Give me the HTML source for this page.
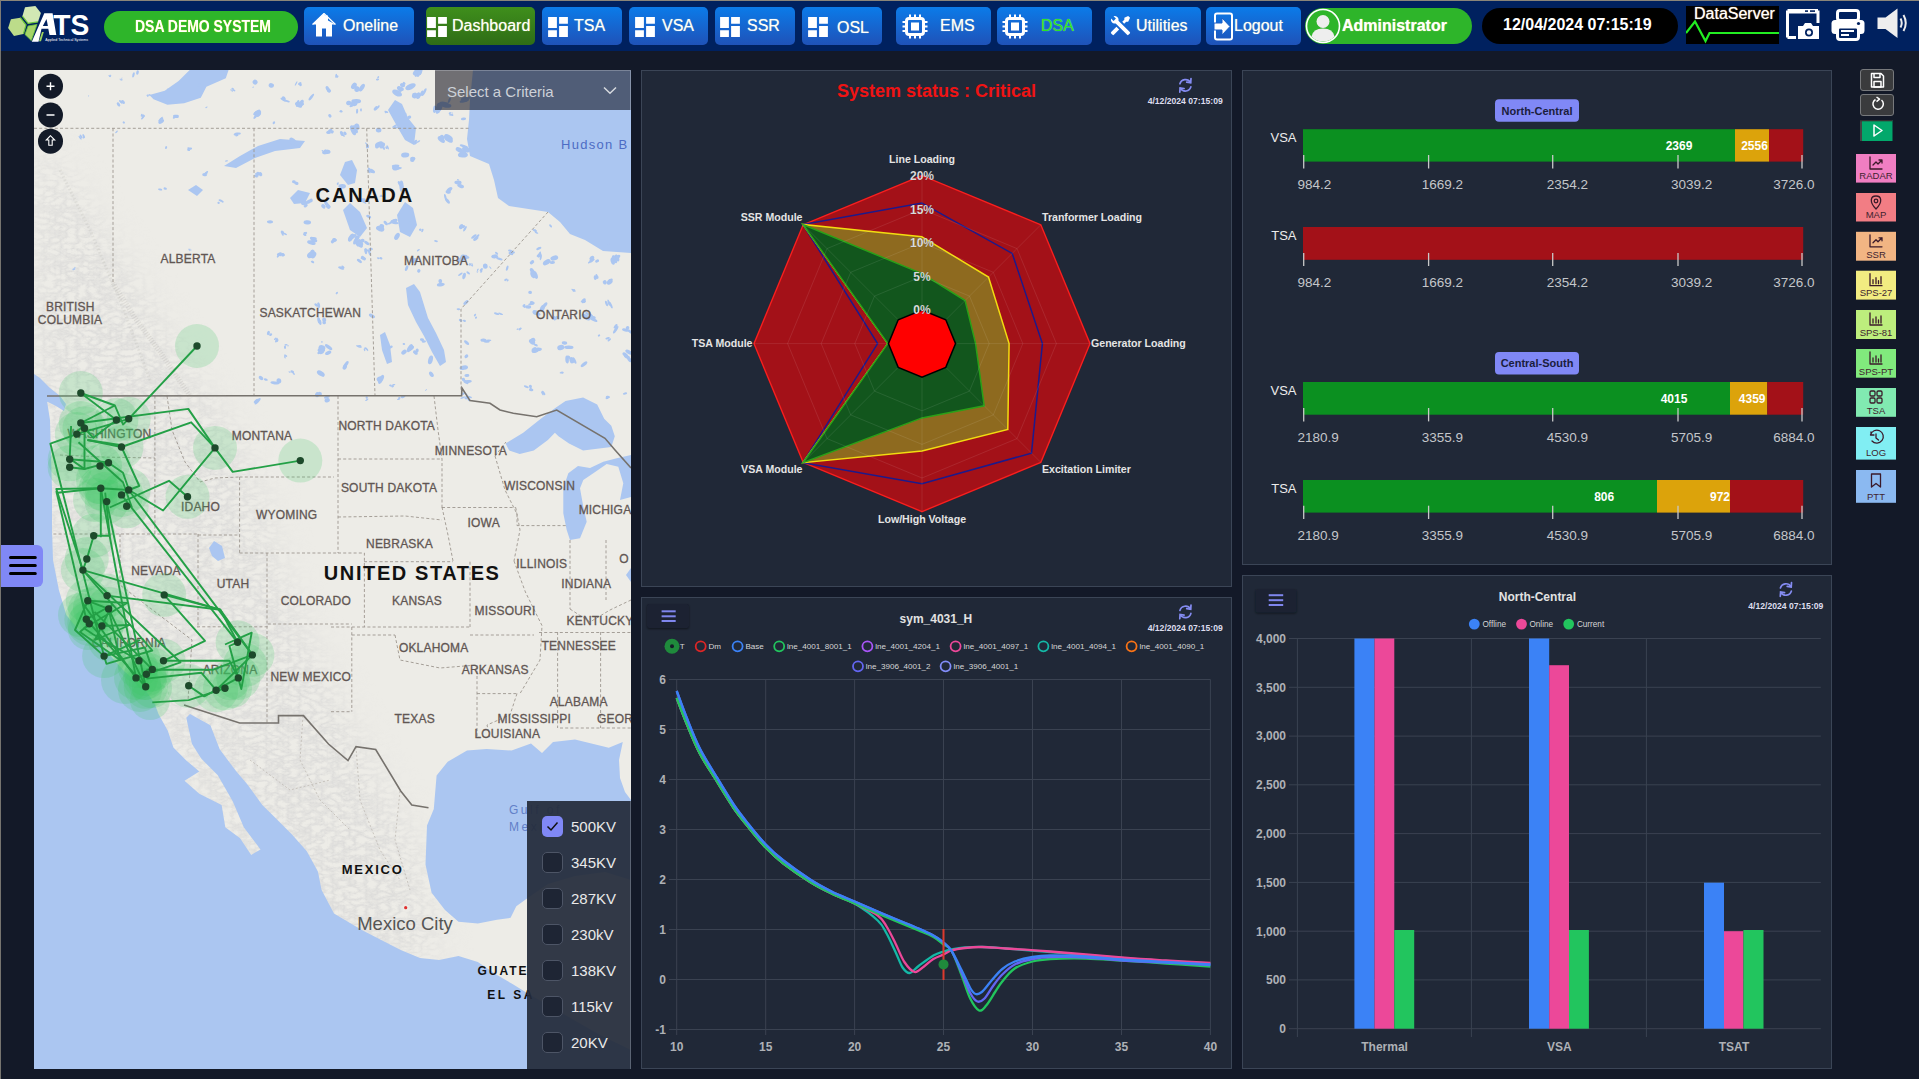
<!DOCTYPE html>
<html><head><meta charset="utf-8"><style>
*{margin:0;padding:0;box-sizing:border-box}
html,body{width:1919px;height:1079px;overflow:hidden}
body{background:#131928;font-family:"Liberation Sans",sans-serif;position:relative;color:#fff}
.abs{position:absolute}
#hdr{position:absolute;left:0;top:0;width:1919px;height:51px;background:#00215f}
#hdr:before{content:"";position:absolute;left:0;top:0;width:1919px;height:1px;background:#8a8579}
#hdr:after{content:"";position:absolute;left:0;top:0;width:1px;height:51px;background:#7d7a74}
#lline{position:absolute;left:0;top:51px;width:1px;height:1028px;background:#76746f;z-index:5}
.btn{position:absolute;top:7px;height:38px;border-radius:5px;color:#fff;font-size:16px}
.btn span{position:absolute;top:10px;white-space:nowrap;text-shadow:0 0 1px rgba(255,255,160,.7)}
.btn svg{position:absolute}
.pill{position:absolute;top:11px;height:32px;border-radius:16px;background:#2eb52a}
.panel{position:absolute;background:#202837;border:1px solid #3b4556}
</style></head><body>
<div id="hdr">
<svg class="abs" style="left:0;top:0" width="100" height="50" viewBox="0 0 100 50">
  <polygon points="25,7.3 35.4,6 40.9,13 38,21.9 28.1,23.4 22.4,16.2" fill="#d2e8b4"/>
  <path d="M22.4,16.2 L28.1,23.4 L38,21.9" fill="none" stroke="#6cc83c" stroke-width="1.2"/>
  <polygon points="10.9,19.3 20.3,17.7 26,25 23.4,33.9 14,36 8.1,28.1" fill="#bcdc8a"/>
  <path d="M20.3,17.7 L26,25 L23.4,33.9" fill="none" stroke="#6cc83c" stroke-width="1.2"/>
  <polygon points="28.1,26 37,24.5 31.3,40.6 25,34.4" fill="#a6d468" stroke="#6cc83c" stroke-width="0.8"/>
  <polygon points="31.8,41.7 44.3,13.3 52.6,13.3 56.3,35 49.5,35 48.3,28.7 41.5,28.7 38.5,41.7" fill="#fff"/>
  <polygon points="42.8,26 47.9,26 46.5,19" fill="#00215f"/>
  <polygon points="39,41.2 42,32 43.8,32 41,41.2" fill="#9ed45c"/>
  <text x="53.2" y="35.2" font-family="Liberation Sans" font-weight="bold" font-size="30" fill="#fff" textLength="36" lengthAdjust="spacingAndGlyphs">TS</text>
  <text x="45.3" y="41.3" font-family="Liberation Sans" font-size="3.8" fill="#fff" textLength="42.7" lengthAdjust="spacingAndGlyphs">Applied Technical Systems</text>
 </svg>
<div class="pill" style="left:104px;width:194px"><span class="abs" style="left:31px;top:7px;font-size:16px;font-weight:bold;display:inline-block;transform:scaleX(0.872);transform-origin:0 0;text-shadow:0 0 1px #ee0;white-space:nowrap">DSA DEMO SYSTEM</span></div>
<div class="btn" style="left:304px;width:110px;background:linear-gradient(#0b7be9,#1f52b8)"><svg style="left:8px;top:5px" width="24" height="25" viewBox="0 0 24 25"><path fill="#fff" d="M12 1.5L0.5 12.5h3.5v12h6v-8h4v8h6v-12h3.5L16 8.5V3.5h-3z"/><path d="M12 1.5L0.5 12.5M12 1.5L23.5 12.5" stroke="#fff" stroke-width="1.2"/></svg><span style="left:39px;color:#fff">Oneline</span></div>
<div class="btn" style="left:426px;width:109px;background:linear-gradient(#3f8f1c,#2e6c16)"><svg style="left:0px;top:9px" width="22" height="22" viewBox="2 2 20 20"><path fill="#fff" d="M13,3V9H21V3M13,21H21V11H13M3,21H11V15H3M3,13H11V3H3V13Z"/></svg><span style="left:26px;color:#fff">Dashboard</span></div>
<div class="btn" style="left:542px;width:80px;background:linear-gradient(#0b7be9,#1f52b8)"><svg style="left:5px;top:9px" width="22" height="22" viewBox="2 2 20 20"><path fill="#fff" d="M13,3V9H21V3M13,21H21V11H13M3,21H11V15H3M3,13H11V3H3V13Z"/></svg><span style="left:32px;color:#fff">TSA</span></div>
<div class="btn" style="left:629px;width:79px;background:linear-gradient(#0b7be9,#1f52b8)"><svg style="left:5px;top:9px" width="22" height="22" viewBox="2 2 20 20"><path fill="#fff" d="M13,3V9H21V3M13,21H21V11H13M3,21H11V15H3M3,13H11V3H3V13Z"/></svg><span style="left:33px;color:#fff">VSA</span></div>
<div class="btn" style="left:715px;width:80px;background:linear-gradient(#0b7be9,#1f52b8)"><svg style="left:4px;top:9px" width="22" height="22" viewBox="2 2 20 20"><path fill="#fff" d="M13,3V9H21V3M13,21H21V11H13M3,21H11V15H3M3,13H11V3H3V13Z"/></svg><span style="left:32px;color:#fff">SSR</span></div>
<div class="btn" style="left:802px;width:80px;background:linear-gradient(#0b7be9,#1f52b8)"><svg style="left:5px;top:9px" width="22" height="22" viewBox="2 2 20 20"><path fill="#fff" d="M13,3V9H21V3M13,21H21V11H13M3,21H11V15H3M3,13H11V3H3V13Z"/></svg><span style="left:35px;color:#fff;top:12px">OSL</span></div>
<div class="btn" style="left:896px;width:95px;background:linear-gradient(#0b7be9,#1f52b8)"><svg style="left:6px;top:7px" width="26" height="25" viewBox="0 0 26 25"><rect x="4.5" y="4.5" width="17" height="16" rx="2.5" fill="none" stroke="#fff" stroke-width="3"/><rect x="9" y="8.5" width="8" height="8" fill="#fff"/>
    <g stroke="#fff" stroke-width="2"><path d="M8 0.5v3M13 0.5v3M18 0.5v3M8 21.5v3M13 21.5v3M18 21.5v3M0.5 8h3M0.5 12.5h3M0.5 17h3M22.5 8h3M22.5 12.5h3M22.5 17h3"/></g></svg><span style="left:44px;color:#fff">EMS</span></div>
<div class="btn" style="left:997px;width:95px;background:linear-gradient(#0b7be9,#1f52b8)"><svg style="left:5px;top:7px" width="26" height="25" viewBox="0 0 26 25"><rect x="4.5" y="4.5" width="17" height="16" rx="2.5" fill="none" stroke="#fff" stroke-width="3"/><rect x="9" y="8.5" width="8" height="8" fill="#fff"/>
    <g stroke="#fff" stroke-width="2"><path d="M8 0.5v3M13 0.5v3M18 0.5v3M8 21.5v3M13 21.5v3M18 21.5v3M0.5 8h3M0.5 12.5h3M0.5 17h3M22.5 8h3M22.5 12.5h3M22.5 17h3"/></g></svg><span style="left:44px;color:#22e622">DSA</span></div>
<div class="btn" style="left:1105px;width:96px;background:linear-gradient(#0b7be9,#1f52b8)"><svg style="left:4px;top:7px" width="23" height="23" viewBox="0 0 24 24"><path fill="#fff" d="M21.71 20.29L20.29 21.71A1 1 0 0 1 18.88 21.71L7 9.85A3.81 3.81 0 0 1 6 10A4 4 0 0 1 2.22 4.7L4.76 7.24L5.29 6.71L6.71 5.29L7.24 4.76L4.7 2.22A4 4 0 0 1 10 6A3.81 3.81 0 0 1 9.85 7L21.71 18.88A1 1 0 0 1 21.71 20.29M2.29 18.88A1 1 0 0 0 2.29 20.29L3.71 21.71A1 1 0 0 0 5.12 21.71L10.59 16.25L7.76 13.42M20 2L16 4V6L13.83 8.17L15.83 10.17L18 8H20L22 4Z"/></svg><span style="left:31px;color:#fff">Utilities</span></div>
<div class="btn" style="left:1206px;width:95px;background:linear-gradient(#0b7be9,#1f52b8)"><svg style="left:7px;top:5px" width="22" height="29" viewBox="0 0 22 29"><rect x="2" y="1.5" width="17" height="26" rx="2" fill="none" stroke="#fff" stroke-width="2"/><path fill="#fff" d="M1 11h8v-5l8 8.5l-8 8.5v-5h-8z" stroke="#1a5fc8" stroke-width="1"/></svg><span style="left:28px;color:#fff">Logout</span></div>
<div class="pill" style="left:1305px;top:8px;height:36px;width:167px;border-radius:18px">
  <svg class="abs" style="left:0;top:0" width="36" height="36" viewBox="0 0 36 36"><circle cx="18" cy="18" r="16.5" fill="#2eb52a" stroke="#fff" stroke-width="1.6"/>
  <circle cx="18" cy="13.5" r="6.5" fill="#eee"/><path d="M6.5 28.5Q8 20.5 18 20.5Q28 20.5 29.5 28.5Q25 33.5 18 33.5Q11 33.5 6.5 28.5z" fill="#eee"/></svg>
  <span class="abs" style="left:37px;top:9px;font-size:16px;font-weight:bold;white-space:nowrap;text-shadow:0 0 1px #ee8">Administrator</span></div>
<div class="abs" style="left:1482px;top:8px;width:196px;height:36px;border-radius:18px;background:#000"><span class="abs" style="left:21px;top:8px;font-size:16px;font-weight:bold;white-space:nowrap">12/04/2024 07:15:19</span></div>
<div class="abs" style="left:1686px;top:6px;width:93px;height:38px;background:#000">
 <span class="abs" style="left:8px;top:-1px;font-size:16px;white-space:nowrap;text-shadow:0 0 1px #fc8">DataServer</span>
 <svg class="abs" style="left:0;top:0" width="93" height="38"><polyline points="0,27 9,15.5 19.5,35 23.5,27 93,27" fill="none" stroke="#22ee22" stroke-width="2.2"/></svg></div>
<svg class="abs" style="left:1786px;top:9px" width="36" height="32" viewBox="0 0 36 32">
 <path d="M1.5 28.5V3H32V14" fill="none" stroke="#fff" stroke-width="3"/><path d="M1.5 1.5H32" stroke="#fff" stroke-width="3"/>
 <rect x="19" y="1.3" width="3" height="1.6" fill="#00215f"/><rect x="24" y="1.3" width="5" height="1.6" fill="#00215f"/>
 <path d="M1.5 28.5H10" stroke="#fff" stroke-width="3"/>
 <path d="M12 17h5l2-3h6l2 3h6v13h-21z" fill="#fff"/><circle cx="23" cy="23.5" r="4" fill="#00215f"/><circle cx="23" cy="23.5" r="2.2" fill="#fff"/></svg>
<svg class="abs" style="left:1831px;top:9px" width="34" height="32" viewBox="0 0 34 32">
 <rect x="6.5" y="1.5" width="21" height="10" rx="2.5" fill="none" stroke="#fff" stroke-width="3"/>
 <rect x="0.5" y="11" width="33" height="14" rx="3.5" fill="#fff"/>
 <rect x="6.5" y="18" width="21" height="12.5" rx="2.5" fill="#00215f" stroke="#fff" stroke-width="3"/>
 <rect x="10" y="21" width="13" height="2" fill="#fff"/><rect x="10" y="25" width="8" height="2" fill="#fff"/>
 <circle cx="27.5" cy="14.5" r="1.6" fill="#00215f"/></svg>
<svg class="abs" style="left:1877px;top:8px" width="32" height="31" viewBox="0 0 32 31">
 <path d="M0.5 9.5H8.5L20.5 0.5V30L8.5 21H0.5z" fill="#eee"/>
 <path d="M23.5 10.5Q26 15 23.5 19.5M26.5 7Q31 15 26.5 23" fill="none" stroke="#eee" stroke-width="2"/></svg>
</div>
<div id="lline"></div>
<div class="abs" style="left:34px;top:70px;width:597px;height:999px;overflow:hidden;background:#edece7">
<svg class="abs" style="left:0;top:0" width="597" height="999" viewBox="34 70 597 999">
<defs>
<filter id="terr" x="0" y="0" width="100%" height="100%"><feTurbulence type="turbulence" baseFrequency="0.09 0.16" numOctaves="3" seed="4"/>
<feColorMatrix type="matrix" values="0 0 0 0 0.55  0 0 0 0 0.55  0 0 0 0 0.57  -1.5 0 0 0 0.75"/></filter>
<filter id="blr"><feGaussianBlur stdDeviation="18"/></filter><mask id="mtn" maskUnits="userSpaceOnUse" x="34" y="70" width="597" height="999"><polygon points="34,130 70,180 130,270 190,370 235,430 265,500 285,580 310,640 340,700 370,760 420,850 440,960 300,960 150,720 34,560" fill="#fff" filter="url(#blr)"/></mask>
</defs>
<g mask="url(#mtn)" opacity="0.55"><rect x="34" y="70" width="597" height="999" filter="url(#terr)"/></g>
<polygon points="34.0,398.0 42.0,397.0 47.0,401.0 50.0,420.0 50.7,447.0 52.0,488.0 52.0,530.0 53.0,560.0 58.9,590.0 66.3,615.0 81.9,634.0 99.0,643.0 124.0,671.0 145.0,689.0 154.8,703.9 158.5,714.1 167.8,730.8 173.4,747.5 186.3,760.4 199.3,771.6 184.5,780.8 199.3,793.8 221.6,804.9 225.3,827.2 240.1,838.3 251.2,855.0 260.5,849.4 243.8,827.2 232.7,801.2 217.8,775.3 201.2,758.6 191.9,743.8 186.3,717.8 190.0,714.1 210.4,725.2 219.7,749.3 236.4,771.6 247.5,784.5 262.3,804.9 273.5,816.0 292.0,834.6 306.8,851.3 317.9,871.6 321.6,890.0 334.0,913.5 361.8,930.0 400.7,950.0 420.0,958.0 439.0,960.0 458.5,956.0 477.8,962.0 497.0,975.0 512.5,984.0 527.0,993.0 560.0,1012.0 600.0,1035.0 631.0,1050.0 631.0,1069.0 34.0,1069.0" fill="#abc6f1"/>
<polygon points="34.0,374.0 40.0,378.0 50.0,388.0 60.0,396.0 66.0,404.0 64.0,411.0 56.0,406.0 48.0,402.0 34.0,400.0" fill="#abc6f1"/>
<polygon points="433.8,809.0 436.6,775.6 447.7,761.7 467.0,750.6 486.6,749.0 511.6,750.6 531.0,743.6 542.0,753.0 553.0,742.0 575.0,739.4 608.8,747.8 622.8,742.0 619.0,760.0 620.0,778.0 625.0,792.0 631.0,800.0 631.0,880.0 605.0,872.0 575.0,876.0 548.0,884.0 527.0,898.5 516.3,906.2 510.6,917.8 497.0,919.7 477.8,923.6 458.5,921.7 445.0,910.0 431.6,892.8 425.5,864.6 427.0,825.6" fill="#abc6f1"/>
<polygon points="473.0,70.0 631.0,70.0 631.0,253.0 603.0,251.0 585.0,240.0 570.0,234.0 560.0,222.0 548.0,212.0 509.0,206.0 498.0,198.0 494.0,180.0 489.0,164.0 470.0,156.0 467.0,139.0 469.0,120.0 470.0,100.0" fill="#abc6f1"/>
<polygon points="505.6,443.4 523.2,432.8 540.8,418.7 554.9,408.2 565.5,401.1 583.1,397.6 597.2,404.6 604.2,418.7 611.3,425.8 614.8,436.3 611.3,446.9 597.2,448.7 583.1,450.4 569.0,443.4 558.5,436.3 554.9,432.8 547.9,439.9 533.8,450.4 519.7,453.9 509.2,450.4" fill="#abc6f1"/>
<polygon points="568.3,473.3 563.3,488.3 563.3,513.3 566.7,530.0 570.0,540.0 580.0,538.3 586.7,521.7 583.3,506.7 580.0,488.3 583.3,480.0 593.3,473.3 606.7,464.0 618.3,466.7 623.3,483.3 620.0,500.0 631.0,497.0 631.0,455.0 616.7,458.3 603.3,461.7 590.0,468.0 578.0,466.0" fill="#abc6f1"/>
<polygon points="149.4,95.0 164.7,90.8 178.6,81.1 189.7,70.0 228.6,70.0 225.8,78.3 206.4,86.7 200.8,97.8 184.1,103.3 167.4,104.7 153.5,99.2" fill="#abc6f1"/>
<polygon points="224.0,166.0 240.0,156.0 258.0,146.0 280.0,139.0 305.0,141.0 300.0,148.0 275.0,151.0 255.0,158.0 236.0,168.0" fill="#abc6f1"/>
<polygon points="406.0,288.0 414.0,284.0 420.0,292.0 424.0,305.0 428.0,318.0 436.0,333.0 444.0,350.0 446.0,362.0 440.0,366.0 432.0,352.0 424.0,336.0 416.0,322.0 408.0,305.0" fill="#abc6f1"/>
<polygon points="380.0,335.0 385.0,332.0 390.0,345.0 392.0,362.0 387.0,364.0 382.0,350.0" fill="#abc6f1"/>
<polygon points="631.0,568.0 626.0,575.0 631.0,582.0" fill="#abc6f1"/>
<polygon points="209.0,548.0 214.0,541.0 222.0,546.0 225.0,558.0 218.0,561.0 212.0,556.0" fill="#abc6f1"/>
<polygon points="340.0,175.0 345.0,162.0 352.0,160.0 357.0,170.0 355.0,183.0 348.0,185.0" fill="#abc6f1"/>
<polygon points="388.0,110.0 395.0,100.0 402.0,104.0 408.0,118.0 416.0,128.0 414.0,145.0 405.0,140.0 398.0,128.0" fill="#abc6f1"/>
<polygon points="343.0,210.0 350.0,203.0 360.0,212.0 367.0,228.0 360.0,237.0 350.0,230.0" fill="#abc6f1"/>
<polygon points="397.0,215.0 405.0,202.0 413.0,208.0 417.0,225.0 410.0,237.0 400.0,232.0" fill="#abc6f1"/>
<polygon points="290.0,198.0 298.0,190.0 310.0,193.0 305.0,203.0 294.0,204.0" fill="#abc6f1"/>
<polygon points="188.0,190.0 196.0,185.0 203.0,190.0 197.0,196.0" fill="#abc6f1"/>
<g fill="#abc6f1"><ellipse cx="356.2" cy="101.3" rx="4.9" ry="2.2" transform="rotate(-1 356.2 101.3)"/><ellipse cx="348.8" cy="103.0" rx="2.7" ry="2.3" transform="rotate(13 348.8 103.0)"/><ellipse cx="353.8" cy="104.0" rx="3.5" ry="2.1" transform="rotate(5 353.8 104.0)"/><ellipse cx="353.9" cy="104.2" rx="5.0" ry="1.5" transform="rotate(-30 353.9 104.2)"/><ellipse cx="447.5" cy="105.7" rx="3.9" ry="2.0" transform="rotate(-0 447.5 105.7)"/><ellipse cx="443.7" cy="104.3" rx="4.9" ry="2.7" transform="rotate(9 443.7 104.3)"/><ellipse cx="446.2" cy="104.5" rx="2.7" ry="1.7" transform="rotate(-30 446.2 104.5)"/><ellipse cx="414.7" cy="95.6" rx="2.8" ry="2.8" transform="rotate(-83 414.7 95.6)"/><ellipse cx="418.4" cy="95.7" rx="3.4" ry="2.2" transform="rotate(-76 418.4 95.7)"/><ellipse cx="421.6" cy="93.4" rx="3.1" ry="1.3" transform="rotate(-65 421.6 93.4)"/><ellipse cx="424.2" cy="92.1" rx="4.3" ry="1.3" transform="rotate(-62 424.2 92.1)"/><ellipse cx="361.0" cy="109.9" rx="1.6" ry="0.9" transform="rotate(92 361.0 109.9)"/><ellipse cx="357.1" cy="111.3" rx="2.5" ry="1.1" transform="rotate(93 357.1 111.3)"/><ellipse cx="255.1" cy="82.1" rx="2.4" ry="2.5" transform="rotate(-48 255.1 82.1)"/><ellipse cx="337.3" cy="76.5" rx="1.3" ry="1.1" transform="rotate(-51 337.3 76.5)"/><ellipse cx="336.1" cy="75.8" rx="2.1" ry="0.9" transform="rotate(-81 336.1 75.8)"/><ellipse cx="385.7" cy="112.6" rx="1.1" ry="0.6" transform="rotate(7 385.7 112.6)"/><ellipse cx="386.3" cy="111.9" rx="2.1" ry="0.9" transform="rotate(22 386.3 111.9)"/><ellipse cx="449.4" cy="100.2" rx="3.0" ry="1.1" transform="rotate(-67 449.4 100.2)"/><ellipse cx="449.9" cy="113.1" rx="1.3" ry="0.9" transform="rotate(-26 449.9 113.1)"/><ellipse cx="451.1" cy="114.9" rx="2.1" ry="0.9" transform="rotate(2 451.1 114.9)"/><ellipse cx="452.1" cy="113.0" rx="0.9" ry="0.5" transform="rotate(13 452.1 113.0)"/><ellipse cx="452.5" cy="115.1" rx="0.9" ry="0.9" transform="rotate(-8 452.5 115.1)"/><ellipse cx="410.5" cy="86.7" rx="5.6" ry="2.8" transform="rotate(-25 410.5 86.7)"/><ellipse cx="463.7" cy="90.9" rx="1.9" ry="1.1" transform="rotate(60 463.7 90.9)"/><ellipse cx="462.7" cy="90.8" rx="1.6" ry="0.9" transform="rotate(35 462.7 90.8)"/><ellipse cx="462.7" cy="92.4" rx="2.0" ry="1.0" transform="rotate(51 462.7 92.4)"/><ellipse cx="463.1" cy="91.3" rx="1.4" ry="1.1" transform="rotate(35 463.1 91.3)"/><ellipse cx="420.2" cy="71.7" rx="3.7" ry="1.9" transform="rotate(-68 420.2 71.7)"/><ellipse cx="419.7" cy="73.0" rx="2.1" ry="1.8" transform="rotate(-66 419.7 73.0)"/><ellipse cx="418.4" cy="72.9" rx="4.1" ry="1.7" transform="rotate(-80 418.4 72.9)"/><ellipse cx="415.5" cy="72.4" rx="3.3" ry="2.1" transform="rotate(-54 415.5 72.4)"/><ellipse cx="296.1" cy="83.5" rx="2.5" ry="0.7" transform="rotate(-62 296.1 83.5)"/><ellipse cx="300.6" cy="85.0" rx="1.3" ry="1.1" transform="rotate(-19 300.6 85.0)"/><ellipse cx="299.8" cy="83.6" rx="1.9" ry="1.2" transform="rotate(-30 299.8 83.6)"/><ellipse cx="436.7" cy="107.7" rx="1.8" ry="1.1" transform="rotate(-24 436.7 107.7)"/><ellipse cx="378.5" cy="106.8" rx="1.7" ry="0.9" transform="rotate(-60 378.5 106.8)"/><ellipse cx="375.9" cy="108.4" rx="2.7" ry="1.7" transform="rotate(-44 375.9 108.4)"/><ellipse cx="404.1" cy="83.3" rx="1.6" ry="1.2" transform="rotate(44 404.1 83.3)"/><ellipse cx="402.5" cy="85.2" rx="2.6" ry="2.0" transform="rotate(13 402.5 85.2)"/><ellipse cx="438.7" cy="110.0" rx="1.8" ry="1.2" transform="rotate(81 438.7 110.0)"/><ellipse cx="436.8" cy="111.4" rx="2.5" ry="1.3" transform="rotate(83 436.8 111.4)"/><ellipse cx="437.3" cy="111.7" rx="1.4" ry="1.3" transform="rotate(76 437.3 111.7)"/><ellipse cx="438.3" cy="111.9" rx="1.4" ry="1.4" transform="rotate(85 438.3 111.9)"/><ellipse cx="467.3" cy="99.2" rx="3.5" ry="1.3" transform="rotate(-41 467.3 99.2)"/><ellipse cx="464.3" cy="100.7" rx="4.8" ry="1.6" transform="rotate(-15 464.3 100.7)"/><ellipse cx="464.4" cy="99.3" rx="3.6" ry="2.3" transform="rotate(-13 464.4 99.3)"/><ellipse cx="356.1" cy="130.9" rx="2.5" ry="1.7" transform="rotate(64 356.1 130.9)"/><ellipse cx="353.9" cy="129.5" rx="4.3" ry="2.2" transform="rotate(80 353.9 129.5)"/><ellipse cx="356.8" cy="126.8" rx="3.4" ry="2.7" transform="rotate(82 356.8 126.8)"/><ellipse cx="353.0" cy="130.3" rx="5.3" ry="2.2" transform="rotate(66 353.0 130.3)"/><ellipse cx="301.8" cy="102.1" rx="2.5" ry="1.9" transform="rotate(-63 301.8 102.1)"/><ellipse cx="298.1" cy="102.9" rx="1.7" ry="1.6" transform="rotate(-70 298.1 102.9)"/><ellipse cx="301.7" cy="104.0" rx="2.2" ry="1.5" transform="rotate(-85 301.7 104.0)"/><ellipse cx="297.7" cy="103.5" rx="3.6" ry="1.5" transform="rotate(-75 297.7 103.5)"/><ellipse cx="301.5" cy="103.5" rx="2.7" ry="1.4" transform="rotate(17 301.5 103.5)"/><ellipse cx="298.6" cy="104.9" rx="3.9" ry="2.2" transform="rotate(32 298.6 104.9)"/><ellipse cx="439.4" cy="108.8" rx="3.6" ry="1.9" transform="rotate(-49 439.4 108.8)"/><ellipse cx="438.5" cy="105.3" rx="2.5" ry="1.9" transform="rotate(-62 438.5 105.3)"/><ellipse cx="434.7" cy="109.3" rx="3.7" ry="1.7" transform="rotate(-83 434.7 109.3)"/><ellipse cx="439.1" cy="109.1" rx="2.4" ry="2.3" transform="rotate(-82 439.1 109.1)"/><ellipse cx="273.9" cy="122.7" rx="1.5" ry="1.1" transform="rotate(-52 273.9 122.7)"/><ellipse cx="341.1" cy="111.1" rx="1.2" ry="0.9" transform="rotate(17 341.1 111.1)"/><ellipse cx="341.0" cy="111.5" rx="1.7" ry="0.9" transform="rotate(9 341.0 111.5)"/><ellipse cx="257.5" cy="113.1" rx="3.9" ry="2.3" transform="rotate(-28 257.5 113.1)"/><ellipse cx="256.8" cy="112.4" rx="4.2" ry="1.7" transform="rotate(-36 256.8 112.4)"/><ellipse cx="258.7" cy="114.5" rx="3.0" ry="1.6" transform="rotate(-44 258.7 114.5)"/><ellipse cx="256.1" cy="115.7" rx="3.9" ry="1.3" transform="rotate(-52 256.1 115.7)"/><ellipse cx="415.5" cy="94.1" rx="1.2" ry="1.3" transform="rotate(-38 415.5 94.1)"/><ellipse cx="416.1" cy="96.1" rx="1.9" ry="0.8" transform="rotate(-52 416.1 96.1)"/><ellipse cx="329.9" cy="115.8" rx="1.9" ry="1.5" transform="rotate(53 329.9 115.8)"/><ellipse cx="401.3" cy="116.7" rx="2.8" ry="1.4" transform="rotate(-22 401.3 116.7)"/><ellipse cx="409.2" cy="117.3" rx="2.1" ry="1.6" transform="rotate(-18 409.2 117.3)"/><ellipse cx="402.4" cy="113.3" rx="3.2" ry="1.5" transform="rotate(-62 402.4 113.3)"/><ellipse cx="404.5" cy="115.0" rx="2.6" ry="1.4" transform="rotate(-46 404.5 115.0)"/><ellipse cx="378.2" cy="77.2" rx="1.2" ry="0.8" transform="rotate(-54 378.2 77.2)"/><ellipse cx="377.5" cy="79.5" rx="1.6" ry="0.9" transform="rotate(-11 377.5 79.5)"/><ellipse cx="378.6" cy="130.1" rx="2.8" ry="2.3" transform="rotate(1 378.6 130.1)"/><ellipse cx="463.5" cy="118.9" rx="2.6" ry="1.4" transform="rotate(-8 463.5 118.9)"/><ellipse cx="361.9" cy="87.7" rx="4.3" ry="2.1" transform="rotate(-57 361.9 87.7)"/><ellipse cx="353.9" cy="85.9" rx="3.6" ry="2.4" transform="rotate(-55 353.9 85.9)"/><ellipse cx="356.9" cy="89.1" rx="3.0" ry="2.6" transform="rotate(-79 356.9 89.1)"/><ellipse cx="419.5" cy="73.9" rx="1.8" ry="0.6" transform="rotate(-54 419.5 73.9)"/><ellipse cx="415.8" cy="75.5" rx="1.4" ry="0.7" transform="rotate(-57 415.8 75.5)"/><ellipse cx="415.8" cy="74.3" rx="1.7" ry="1.0" transform="rotate(-41 415.8 74.3)"/><ellipse cx="416.8" cy="75.2" rx="2.0" ry="0.6" transform="rotate(-60 416.8 75.2)"/><ellipse cx="283.7" cy="98.3" rx="2.2" ry="1.7" transform="rotate(43 283.7 98.3)"/><ellipse cx="283.4" cy="99.6" rx="3.3" ry="1.2" transform="rotate(27 283.4 99.6)"/><ellipse cx="286.4" cy="100.9" rx="3.6" ry="1.0" transform="rotate(18 286.4 100.9)"/><ellipse cx="311.3" cy="97.1" rx="4.1" ry="1.3" transform="rotate(-52 311.3 97.1)"/><ellipse cx="327.9" cy="89.2" rx="3.4" ry="1.7" transform="rotate(61 327.9 89.2)"/><ellipse cx="329.0" cy="90.6" rx="2.1" ry="1.9" transform="rotate(41 329.0 90.6)"/><ellipse cx="394.7" cy="125.9" rx="2.9" ry="0.9" transform="rotate(-31 394.7 125.9)"/><ellipse cx="395.9" cy="127.3" rx="2.5" ry="1.1" transform="rotate(4 395.9 127.3)"/><ellipse cx="271.3" cy="85.4" rx="2.7" ry="2.3" transform="rotate(13 271.3 85.4)"/><ellipse cx="397.1" cy="93.1" rx="5.3" ry="2.9" transform="rotate(26 397.1 93.1)"/><ellipse cx="399.6" cy="89.0" rx="3.2" ry="2.0" transform="rotate(51 399.6 89.0)"/><ellipse cx="400.6" cy="88.7" rx="3.4" ry="2.0" transform="rotate(22 400.6 88.7)"/><ellipse cx="304.6" cy="234.4" rx="1.7" ry="0.7" transform="rotate(55 304.6 234.4)"/><ellipse cx="306.2" cy="232.8" rx="1.0" ry="0.9" transform="rotate(44 306.2 232.8)"/><ellipse cx="304.8" cy="234.7" rx="1.8" ry="1.1" transform="rotate(20 304.8 234.7)"/><ellipse cx="321.9" cy="341.9" rx="0.8" ry="0.8" transform="rotate(-52 321.9 341.9)"/><ellipse cx="357.2" cy="244.1" rx="2.7" ry="1.5" transform="rotate(61 357.2 244.1)"/><ellipse cx="358.5" cy="242.8" rx="3.0" ry="1.9" transform="rotate(48 358.5 242.8)"/><ellipse cx="360.5" cy="242.4" rx="3.7" ry="1.9" transform="rotate(55 360.5 242.4)"/><ellipse cx="359.6" cy="244.5" rx="3.9" ry="2.2" transform="rotate(44 359.6 244.5)"/><ellipse cx="324.2" cy="319.8" rx="2.2" ry="2.0" transform="rotate(69 324.2 319.8)"/><ellipse cx="318.9" cy="320.5" rx="3.2" ry="1.5" transform="rotate(79 318.9 320.5)"/><ellipse cx="320.2" cy="322.4" rx="2.6" ry="1.3" transform="rotate(80 320.2 322.4)"/><ellipse cx="324.2" cy="322.5" rx="1.8" ry="1.8" transform="rotate(74 324.2 322.5)"/><ellipse cx="293.9" cy="181.8" rx="1.9" ry="1.5" transform="rotate(9 293.9 181.8)"/><ellipse cx="296.4" cy="183.3" rx="2.2" ry="1.5" transform="rotate(17 296.4 183.3)"/><ellipse cx="363.3" cy="258.4" rx="2.8" ry="1.1" transform="rotate(8 363.3 258.4)"/><ellipse cx="359.4" cy="260.9" rx="3.0" ry="1.5" transform="rotate(36 359.4 260.9)"/><ellipse cx="363.4" cy="258.2" rx="2.9" ry="1.6" transform="rotate(41 363.4 258.2)"/><ellipse cx="366.4" cy="249.4" rx="1.5" ry="0.8" transform="rotate(33 366.4 249.4)"/><ellipse cx="368.2" cy="250.8" rx="2.5" ry="0.8" transform="rotate(17 368.2 250.8)"/><ellipse cx="366.4" cy="251.2" rx="1.0" ry="1.2" transform="rotate(32 366.4 251.2)"/><ellipse cx="369.8" cy="249.2" rx="1.4" ry="1.2" transform="rotate(-5 369.8 249.2)"/><ellipse cx="311.9" cy="253.6" rx="4.1" ry="2.4" transform="rotate(-70 311.9 253.6)"/><ellipse cx="310.3" cy="255.0" rx="3.5" ry="2.7" transform="rotate(-44 310.3 255.0)"/><ellipse cx="313.2" cy="254.9" rx="3.7" ry="2.8" transform="rotate(-59 313.2 254.9)"/><ellipse cx="264.4" cy="148.9" rx="1.0" ry="0.8" transform="rotate(43 264.4 148.9)"/><ellipse cx="264.3" cy="148.2" rx="1.2" ry="0.6" transform="rotate(38 264.3 148.2)"/><ellipse cx="264.9" cy="149.1" rx="1.8" ry="1.1" transform="rotate(7 264.9 149.1)"/><ellipse cx="263.9" cy="149.3" rx="1.8" ry="1.1" transform="rotate(37 263.9 149.3)"/><ellipse cx="323.7" cy="152.9" rx="1.7" ry="1.1" transform="rotate(24 323.7 152.9)"/><ellipse cx="325.9" cy="150.5" rx="1.1" ry="0.6" transform="rotate(41 325.9 150.5)"/><ellipse cx="325.4" cy="150.8" rx="1.5" ry="1.1" transform="rotate(37 325.4 150.8)"/><ellipse cx="322.6" cy="150.9" rx="1.1" ry="0.7" transform="rotate(28 322.6 150.9)"/><ellipse cx="265.8" cy="379.6" rx="2.0" ry="1.1" transform="rotate(16 265.8 379.6)"/><ellipse cx="261.0" cy="378.0" rx="2.6" ry="1.7" transform="rotate(35 261.0 378.0)"/><ellipse cx="336.9" cy="293.4" rx="1.2" ry="0.5" transform="rotate(-52 336.9 293.4)"/><ellipse cx="336.8" cy="292.7" rx="1.4" ry="0.5" transform="rotate(-42 336.8 292.7)"/><ellipse cx="336.9" cy="293.0" rx="1.3" ry="0.7" transform="rotate(-40 336.9 293.0)"/><ellipse cx="274.9" cy="382.9" rx="4.5" ry="1.5" transform="rotate(8 274.9 382.9)"/><ellipse cx="278.9" cy="380.9" rx="2.4" ry="2.7" transform="rotate(-2 278.9 380.9)"/><ellipse cx="365.7" cy="251.3" rx="3.1" ry="1.4" transform="rotate(77 365.7 251.3)"/><ellipse cx="369.5" cy="252.6" rx="3.2" ry="1.2" transform="rotate(73 369.5 252.6)"/><ellipse cx="289.5" cy="372.1" rx="1.1" ry="0.6" transform="rotate(30 289.5 372.1)"/><ellipse cx="293.5" cy="373.3" rx="2.0" ry="0.8" transform="rotate(55 293.5 373.3)"/><ellipse cx="292.2" cy="371.6" rx="1.9" ry="1.2" transform="rotate(22 292.2 371.6)"/><ellipse cx="279.5" cy="254.9" rx="1.0" ry="0.7" transform="rotate(-32 279.5 254.9)"/><ellipse cx="278.1" cy="256.0" rx="1.8" ry="1.0" transform="rotate(-58 278.1 256.0)"/><ellipse cx="279.9" cy="254.3" rx="1.3" ry="1.1" transform="rotate(-33 279.9 254.3)"/><ellipse cx="280.2" cy="255.1" rx="1.2" ry="1.1" transform="rotate(-55 280.2 255.1)"/><ellipse cx="371.9" cy="315.9" rx="3.3" ry="1.7" transform="rotate(29 371.9 315.9)"/><ellipse cx="295.9" cy="144.1" rx="2.5" ry="1.8" transform="rotate(11 295.9 144.1)"/><ellipse cx="291.9" cy="142.6" rx="3.0" ry="1.6" transform="rotate(10 291.9 142.6)"/><ellipse cx="296.7" cy="143.0" rx="2.3" ry="1.4" transform="rotate(27 296.7 143.0)"/><ellipse cx="292.9" cy="140.7" rx="4.0" ry="2.3" transform="rotate(41 292.9 140.7)"/><ellipse cx="362.6" cy="240.6" rx="2.0" ry="1.8" transform="rotate(2 362.6 240.6)"/><ellipse cx="366.8" cy="243.0" rx="3.0" ry="1.5" transform="rotate(32 366.8 243.0)"/><ellipse cx="257.3" cy="174.2" rx="2.4" ry="0.8" transform="rotate(21 257.3 174.2)"/><ellipse cx="260.5" cy="174.1" rx="2.2" ry="1.7" transform="rotate(68 260.5 174.1)"/><ellipse cx="257.8" cy="173.7" rx="1.8" ry="1.7" transform="rotate(64 257.8 173.7)"/><ellipse cx="256.0" cy="176.1" rx="2.0" ry="1.2" transform="rotate(28 256.0 176.1)"/><ellipse cx="366.7" cy="397.5" rx="1.1" ry="1.1" transform="rotate(-53 366.7 397.5)"/><ellipse cx="366.8" cy="399.8" rx="1.9" ry="0.7" transform="rotate(-33 366.8 399.8)"/><ellipse cx="370.8" cy="249.5" rx="1.1" ry="0.9" transform="rotate(51 370.8 249.5)"/><ellipse cx="371.5" cy="248.6" rx="1.7" ry="0.8" transform="rotate(31 371.5 248.6)"/><ellipse cx="317.3" cy="394.6" rx="2.2" ry="2.6" transform="rotate(20 317.3 394.6)"/><ellipse cx="319.8" cy="394.0" rx="2.1" ry="2.1" transform="rotate(13 319.8 394.0)"/><ellipse cx="285.2" cy="345.7" rx="1.6" ry="0.5" transform="rotate(83 285.2 345.7)"/><ellipse cx="285.0" cy="347.4" rx="1.5" ry="1.0" transform="rotate(73 285.0 347.4)"/><ellipse cx="284.5" cy="347.4" rx="0.8" ry="0.5" transform="rotate(82 284.5 347.4)"/><ellipse cx="368.7" cy="216.6" rx="2.7" ry="1.4" transform="rotate(25 368.7 216.6)"/><ellipse cx="276.5" cy="340.8" rx="1.9" ry="1.1" transform="rotate(-50 276.5 340.8)"/><ellipse cx="276.7" cy="339.3" rx="1.6" ry="0.9" transform="rotate(-60 276.7 339.3)"/><ellipse cx="277.2" cy="340.6" rx="1.6" ry="1.1" transform="rotate(-53 277.2 340.6)"/><ellipse cx="275.2" cy="338.8" rx="1.5" ry="0.8" transform="rotate(-40 275.2 338.8)"/><ellipse cx="288.0" cy="345.8" rx="1.0" ry="0.5" transform="rotate(0 288.0 345.8)"/><ellipse cx="286.2" cy="344.8" rx="1.4" ry="0.8" transform="rotate(-2 286.2 344.8)"/><ellipse cx="326.3" cy="152.0" rx="3.6" ry="2.0" transform="rotate(-19 326.3 152.0)"/><ellipse cx="326.9" cy="151.9" rx="3.7" ry="2.1" transform="rotate(6 326.9 151.9)"/><ellipse cx="270.7" cy="334.6" rx="1.6" ry="1.2" transform="rotate(-30 270.7 334.6)"/><ellipse cx="268.4" cy="333.0" rx="2.2" ry="1.4" transform="rotate(-71 268.4 333.0)"/><ellipse cx="256.0" cy="400.8" rx="2.8" ry="1.2" transform="rotate(-42 256.0 400.8)"/><ellipse cx="257.6" cy="401.3" rx="4.1" ry="1.4" transform="rotate(-46 257.6 401.3)"/><ellipse cx="327.2" cy="400.3" rx="2.7" ry="2.1" transform="rotate(-19 327.2 400.3)"/><ellipse cx="326.9" cy="397.0" rx="3.1" ry="1.3" transform="rotate(-20 326.9 397.0)"/><ellipse cx="282.5" cy="254.2" rx="1.9" ry="1.1" transform="rotate(-5 282.5 254.2)"/><ellipse cx="279.4" cy="254.5" rx="2.6" ry="1.2" transform="rotate(-0 279.4 254.5)"/><ellipse cx="283.1" cy="255.3" rx="2.0" ry="1.2" transform="rotate(-15 283.1 255.3)"/><ellipse cx="279.7" cy="253.8" rx="2.3" ry="1.3" transform="rotate(-20 279.7 253.8)"/><ellipse cx="284.9" cy="357.2" rx="1.3" ry="0.7" transform="rotate(66 284.9 357.2)"/><ellipse cx="285.8" cy="355.8" rx="1.6" ry="0.8" transform="rotate(32 285.8 355.8)"/><ellipse cx="285.2" cy="355.4" rx="1.1" ry="0.8" transform="rotate(46 285.2 355.4)"/><ellipse cx="342.9" cy="267.1" rx="1.9" ry="1.2" transform="rotate(42 342.9 267.1)"/><ellipse cx="341.1" cy="268.1" rx="3.3" ry="1.1" transform="rotate(21 341.1 268.1)"/><ellipse cx="340.6" cy="267.4" rx="1.5" ry="0.9" transform="rotate(38 340.6 267.4)"/><ellipse cx="321.3" cy="350.2" rx="3.8" ry="1.8" transform="rotate(4 321.3 350.2)"/><ellipse cx="328.6" cy="347.2" rx="4.4" ry="1.7" transform="rotate(37 328.6 347.2)"/><ellipse cx="321.9" cy="347.9" rx="3.5" ry="2.7" transform="rotate(12 321.9 347.9)"/><ellipse cx="339.6" cy="189.3" rx="2.7" ry="1.4" transform="rotate(-11 339.6 189.3)"/><ellipse cx="342.2" cy="186.2" rx="3.7" ry="2.3" transform="rotate(-1 342.2 186.2)"/><ellipse cx="345.0" cy="133.4" rx="1.9" ry="1.5" transform="rotate(47 345.0 133.4)"/><ellipse cx="343.8" cy="135.7" rx="1.3" ry="0.8" transform="rotate(49 343.8 135.7)"/><ellipse cx="341.8" cy="133.5" rx="2.7" ry="1.6" transform="rotate(64 341.8 133.5)"/><ellipse cx="307.3" cy="222.4" rx="3.8" ry="2.1" transform="rotate(6 307.3 222.4)"/><ellipse cx="310.7" cy="200.6" rx="2.2" ry="1.8" transform="rotate(-26 310.7 200.6)"/><ellipse cx="305.7" cy="205.7" rx="2.2" ry="1.4" transform="rotate(-30 305.7 205.7)"/><ellipse cx="308.6" cy="201.7" rx="1.8" ry="1.9" transform="rotate(-22 308.6 201.7)"/><ellipse cx="304.6" cy="203.1" rx="3.6" ry="1.9" transform="rotate(-10 304.6 203.1)"/><ellipse cx="321.1" cy="351.1" rx="4.5" ry="1.6" transform="rotate(-38 321.1 351.1)"/><ellipse cx="321.6" cy="352.2" rx="2.5" ry="1.8" transform="rotate(-24 321.6 352.2)"/><ellipse cx="328.2" cy="352.8" rx="3.3" ry="1.8" transform="rotate(-25 328.2 352.8)"/><ellipse cx="318.7" cy="305.1" rx="2.9" ry="1.4" transform="rotate(78 318.7 305.1)"/><ellipse cx="316.2" cy="305.0" rx="2.1" ry="1.3" transform="rotate(35 316.2 305.0)"/><ellipse cx="332.7" cy="241.4" rx="2.1" ry="1.6" transform="rotate(-47 332.7 241.4)"/><ellipse cx="334.1" cy="239.6" rx="2.0" ry="1.6" transform="rotate(-17 334.1 239.6)"/><ellipse cx="334.9" cy="240.5" rx="2.2" ry="1.5" transform="rotate(-28 334.9 240.5)"/><ellipse cx="358.0" cy="346.3" rx="2.0" ry="0.8" transform="rotate(27 358.0 346.3)"/><ellipse cx="360.1" cy="347.0" rx="1.2" ry="0.7" transform="rotate(5 360.1 347.0)"/><ellipse cx="359.6" cy="345.7" rx="1.7" ry="0.6" transform="rotate(-0 359.6 345.7)"/><ellipse cx="360.9" cy="346.8" rx="1.1" ry="0.7" transform="rotate(19 360.9 346.8)"/><ellipse cx="351.0" cy="237.7" rx="4.5" ry="2.2" transform="rotate(-60 351.0 237.7)"/><ellipse cx="357.4" cy="237.5" rx="2.4" ry="2.1" transform="rotate(-37 357.4 237.5)"/><ellipse cx="352.5" cy="236.8" rx="4.5" ry="1.9" transform="rotate(-29 352.5 236.8)"/><ellipse cx="355.8" cy="240.4" rx="4.5" ry="1.8" transform="rotate(-63 355.8 240.4)"/><ellipse cx="363.9" cy="200.3" rx="2.5" ry="1.3" transform="rotate(6 363.9 200.3)"/><ellipse cx="362.3" cy="199.6" rx="3.4" ry="1.3" transform="rotate(-4 362.3 199.6)"/><ellipse cx="363.2" cy="201.4" rx="3.6" ry="1.1" transform="rotate(36 363.2 201.4)"/><ellipse cx="313.0" cy="241.4" rx="4.0" ry="1.5" transform="rotate(-8 313.0 241.4)"/><ellipse cx="313.6" cy="239.4" rx="4.0" ry="1.9" transform="rotate(30 313.6 239.4)"/><ellipse cx="311.4" cy="242.7" rx="4.4" ry="1.9" transform="rotate(17 311.4 242.7)"/><ellipse cx="313.5" cy="238.2" rx="3.3" ry="1.2" transform="rotate(6 313.5 238.2)"/><ellipse cx="367.5" cy="146.2" rx="1.9" ry="1.4" transform="rotate(60 367.5 146.2)"/><ellipse cx="367.4" cy="147.0" rx="1.3" ry="1.6" transform="rotate(39 367.4 147.0)"/><ellipse cx="367.0" cy="144.5" rx="2.8" ry="0.7" transform="rotate(47 367.0 144.5)"/><ellipse cx="282.6" cy="234.1" rx="1.8" ry="1.0" transform="rotate(64 282.6 234.1)"/><ellipse cx="282.4" cy="232.2" rx="1.8" ry="1.4" transform="rotate(29 282.4 232.2)"/><ellipse cx="284.8" cy="233.8" rx="2.4" ry="0.9" transform="rotate(24 284.8 233.8)"/><ellipse cx="270.0" cy="221.8" rx="3.1" ry="1.6" transform="rotate(-1 270.0 221.8)"/><ellipse cx="256.9" cy="175.4" rx="1.8" ry="0.7" transform="rotate(25 256.9 175.4)"/><ellipse cx="365.3" cy="348.3" rx="1.1" ry="1.0" transform="rotate(45 365.3 348.3)"/><ellipse cx="366.5" cy="348.8" rx="1.5" ry="0.6" transform="rotate(68 366.5 348.8)"/><ellipse cx="367.4" cy="349.8" rx="1.4" ry="0.7" transform="rotate(66 367.4 349.8)"/><ellipse cx="364.5" cy="349.8" rx="1.5" ry="0.7" transform="rotate(71 364.5 349.8)"/><ellipse cx="305.1" cy="233.0" rx="1.6" ry="1.0" transform="rotate(7 305.1 233.0)"/><ellipse cx="370.2" cy="170.3" rx="3.3" ry="1.2" transform="rotate(52 370.2 170.3)"/><ellipse cx="369.0" cy="171.3" rx="2.3" ry="1.1" transform="rotate(50 369.0 171.3)"/><ellipse cx="372.4" cy="171.1" rx="3.0" ry="1.6" transform="rotate(34 372.4 171.1)"/><ellipse cx="382.1" cy="145.4" rx="3.4" ry="2.4" transform="rotate(-50 382.1 145.4)"/><ellipse cx="377.1" cy="146.4" rx="2.1" ry="2.0" transform="rotate(-21 377.1 146.4)"/><ellipse cx="379.1" cy="144.2" rx="4.2" ry="2.4" transform="rotate(-21 379.1 144.2)"/><ellipse cx="320.8" cy="373.5" rx="4.3" ry="2.4" transform="rotate(30 320.8 373.5)"/><ellipse cx="321.8" cy="373.9" rx="3.4" ry="1.2" transform="rotate(53 321.8 373.9)"/><ellipse cx="312.5" cy="262.1" rx="1.9" ry="0.8" transform="rotate(29 312.5 262.1)"/><ellipse cx="312.7" cy="261.8" rx="1.6" ry="1.0" transform="rotate(27 312.7 261.8)"/><ellipse cx="337.7" cy="183.4" rx="1.3" ry="0.8" transform="rotate(-54 337.7 183.4)"/><ellipse cx="337.9" cy="184.2" rx="1.0" ry="0.6" transform="rotate(-61 337.9 184.2)"/><ellipse cx="345.9" cy="364.4" rx="3.9" ry="1.6" transform="rotate(-52 345.9 364.4)"/><ellipse cx="344.8" cy="367.1" rx="2.7" ry="2.0" transform="rotate(-63 344.8 367.1)"/><ellipse cx="323.4" cy="206.3" rx="2.5" ry="1.9" transform="rotate(48 323.4 206.3)"/><ellipse cx="326.6" cy="203.9" rx="3.7" ry="1.7" transform="rotate(55 326.6 203.9)"/><ellipse cx="328.2" cy="206.4" rx="2.7" ry="2.1" transform="rotate(39 328.2 206.4)"/><ellipse cx="330.0" cy="130.7" rx="2.7" ry="1.4" transform="rotate(-35 330.0 130.7)"/><ellipse cx="332.3" cy="131.9" rx="1.6" ry="1.4" transform="rotate(-40 332.3 131.9)"/><ellipse cx="328.6" cy="132.4" rx="2.4" ry="1.6" transform="rotate(0 328.6 132.4)"/><ellipse cx="458.4" cy="309.2" rx="1.8" ry="1.0" transform="rotate(4 458.4 309.2)"/><ellipse cx="469.2" cy="399.9" rx="1.4" ry="1.2" transform="rotate(16 469.2 399.9)"/><ellipse cx="468.9" cy="396.9" rx="3.2" ry="1.0" transform="rotate(14 468.9 396.9)"/><ellipse cx="397.0" cy="236.4" rx="3.9" ry="2.3" transform="rotate(-61 397.0 236.4)"/><ellipse cx="462.4" cy="259.0" rx="4.9" ry="2.6" transform="rotate(-28 462.4 259.0)"/><ellipse cx="465.8" cy="257.1" rx="3.6" ry="1.4" transform="rotate(10 465.8 257.1)"/><ellipse cx="465.3" cy="256.9" rx="2.4" ry="2.1" transform="rotate(-23 465.3 256.9)"/><ellipse cx="463.2" cy="256.9" rx="2.9" ry="2.4" transform="rotate(-17 463.2 256.9)"/><ellipse cx="415.3" cy="141.7" rx="2.4" ry="1.2" transform="rotate(-46 415.3 141.7)"/><ellipse cx="415.5" cy="143.0" rx="1.3" ry="1.1" transform="rotate(-23 415.5 143.0)"/><ellipse cx="418.3" cy="141.6" rx="2.2" ry="0.8" transform="rotate(-31 418.3 141.6)"/><ellipse cx="415.3" cy="143.5" rx="1.6" ry="0.8" transform="rotate(-40 415.3 143.5)"/><ellipse cx="414.4" cy="260.5" rx="3.7" ry="2.3" transform="rotate(-19 414.4 260.5)"/><ellipse cx="460.6" cy="186.0" rx="3.5" ry="1.8" transform="rotate(21 460.6 186.0)"/><ellipse cx="458.0" cy="182.5" rx="3.6" ry="2.1" transform="rotate(2 458.0 182.5)"/><ellipse cx="418.3" cy="250.2" rx="1.7" ry="0.8" transform="rotate(-36 418.3 250.2)"/><ellipse cx="381.6" cy="226.4" rx="2.4" ry="2.4" transform="rotate(25 381.6 226.4)"/><ellipse cx="380.2" cy="228.7" rx="4.3" ry="2.6" transform="rotate(18 380.2 228.7)"/><ellipse cx="385.7" cy="223.0" rx="2.7" ry="1.5" transform="rotate(46 385.7 223.0)"/><ellipse cx="381.3" cy="228.1" rx="2.8" ry="2.3" transform="rotate(48 381.3 228.1)"/><ellipse cx="466.0" cy="302.5" rx="3.1" ry="1.5" transform="rotate(-39 466.0 302.5)"/><ellipse cx="411.0" cy="348.3" rx="3.6" ry="1.9" transform="rotate(-41 411.0 348.3)"/><ellipse cx="409.9" cy="348.2" rx="4.5" ry="2.2" transform="rotate(-58 409.9 348.2)"/><ellipse cx="404.0" cy="352.2" rx="3.0" ry="2.1" transform="rotate(-38 404.0 352.2)"/><ellipse cx="459.2" cy="149.8" rx="3.7" ry="2.3" transform="rotate(23 459.2 149.8)"/><ellipse cx="466.2" cy="149.7" rx="4.2" ry="2.5" transform="rotate(19 466.2 149.7)"/><ellipse cx="465.6" cy="149.6" rx="3.8" ry="1.7" transform="rotate(35 465.6 149.6)"/><ellipse cx="463.9" cy="146.2" rx="4.3" ry="1.3" transform="rotate(17 463.9 146.2)"/><ellipse cx="390.5" cy="385.5" rx="1.4" ry="1.0" transform="rotate(18 390.5 385.5)"/><ellipse cx="392.6" cy="386.2" rx="1.4" ry="1.1" transform="rotate(-24 392.6 386.2)"/><ellipse cx="393.7" cy="384.8" rx="1.7" ry="0.7" transform="rotate(-12 393.7 384.8)"/><ellipse cx="395.4" cy="223.0" rx="3.4" ry="1.2" transform="rotate(4 395.4 223.0)"/><ellipse cx="393.9" cy="221.2" rx="2.7" ry="1.7" transform="rotate(-14 393.9 221.2)"/><ellipse cx="394.0" cy="221.0" rx="3.7" ry="1.9" transform="rotate(-19 394.0 221.0)"/><ellipse cx="392.7" cy="221.8" rx="3.7" ry="1.1" transform="rotate(-23 392.7 221.8)"/><ellipse cx="418.8" cy="270.9" rx="1.8" ry="1.6" transform="rotate(-61 418.8 270.9)"/><ellipse cx="442.5" cy="284.6" rx="2.3" ry="1.3" transform="rotate(-14 442.5 284.6)"/><ellipse cx="440.3" cy="284.7" rx="3.5" ry="1.8" transform="rotate(-9 440.3 284.7)"/><ellipse cx="440.3" cy="281.1" rx="1.9" ry="2.1" transform="rotate(-8 440.3 281.1)"/><ellipse cx="412.3" cy="160.3" rx="2.2" ry="1.7" transform="rotate(-1 412.3 160.3)"/><ellipse cx="412.8" cy="158.6" rx="2.7" ry="1.9" transform="rotate(3 412.8 158.6)"/><ellipse cx="405.2" cy="155.0" rx="4.1" ry="2.5" transform="rotate(-2 405.2 155.0)"/><ellipse cx="415.4" cy="352.6" rx="2.7" ry="1.7" transform="rotate(36 415.4 352.6)"/><ellipse cx="417.1" cy="350.5" rx="1.6" ry="2.0" transform="rotate(8 417.1 350.5)"/><ellipse cx="448.9" cy="192.1" rx="1.9" ry="1.6" transform="rotate(-2 448.9 192.1)"/><ellipse cx="448.0" cy="191.7" rx="2.5" ry="1.8" transform="rotate(-9 448.0 191.7)"/><ellipse cx="449.5" cy="189.5" rx="3.3" ry="1.8" transform="rotate(-37 449.5 189.5)"/><ellipse cx="412.7" cy="223.2" rx="2.1" ry="1.2" transform="rotate(-27 412.7 223.2)"/><ellipse cx="464.1" cy="276.0" rx="3.2" ry="1.7" transform="rotate(-78 464.1 276.0)"/><ellipse cx="460.4" cy="274.3" rx="2.7" ry="0.9" transform="rotate(-36 460.4 274.3)"/><ellipse cx="462.9" cy="154.9" rx="5.0" ry="2.7" transform="rotate(-2 462.9 154.9)"/><ellipse cx="464.5" cy="154.9" rx="2.1" ry="2.0" transform="rotate(-18 464.5 154.9)"/><ellipse cx="462.8" cy="152.9" rx="3.9" ry="2.7" transform="rotate(-44 462.8 152.9)"/><ellipse cx="426.0" cy="390.0" rx="1.2" ry="0.5" transform="rotate(-44 426.0 390.0)"/><ellipse cx="430.5" cy="359.9" rx="4.5" ry="2.3" transform="rotate(-75 430.5 359.9)"/><ellipse cx="410.5" cy="222.4" rx="1.0" ry="0.8" transform="rotate(-36 410.5 222.4)"/><ellipse cx="409.3" cy="223.1" rx="0.9" ry="0.5" transform="rotate(-46 409.3 223.1)"/><ellipse cx="423.8" cy="341.5" rx="2.2" ry="1.2" transform="rotate(1 423.8 341.5)"/><ellipse cx="422.0" cy="339.6" rx="2.1" ry="1.4" transform="rotate(10 422.0 339.6)"/><ellipse cx="381.3" cy="195.6" rx="1.0" ry="0.9" transform="rotate(-30 381.3 195.6)"/><ellipse cx="381.4" cy="196.2" rx="2.0" ry="0.8" transform="rotate(0 381.4 196.2)"/><ellipse cx="403.1" cy="396.7" rx="2.4" ry="1.3" transform="rotate(-14 403.1 396.7)"/><ellipse cx="398.6" cy="399.3" rx="1.6" ry="0.7" transform="rotate(-13 398.6 399.3)"/><ellipse cx="399.3" cy="398.0" rx="1.3" ry="0.9" transform="rotate(-9 399.3 398.0)"/><ellipse cx="390.2" cy="347.2" rx="2.7" ry="1.4" transform="rotate(-21 390.2 347.2)"/><ellipse cx="422.4" cy="230.5" rx="1.8" ry="1.0" transform="rotate(-68 422.4 230.5)"/><ellipse cx="420.1" cy="229.5" rx="1.2" ry="0.9" transform="rotate(-34 420.1 229.5)"/><ellipse cx="420.6" cy="230.0" rx="1.2" ry="0.6" transform="rotate(-42 420.6 230.0)"/><ellipse cx="379.7" cy="379.1" rx="3.1" ry="2.6" transform="rotate(-24 379.7 379.1)"/><ellipse cx="381.1" cy="379.4" rx="4.9" ry="2.1" transform="rotate(-63 381.1 379.4)"/><ellipse cx="464.2" cy="393.0" rx="1.1" ry="0.9" transform="rotate(29 464.2 393.0)"/><ellipse cx="463.3" cy="393.8" rx="1.7" ry="0.8" transform="rotate(-16 463.3 393.8)"/><ellipse cx="463.3" cy="393.7" rx="0.9" ry="1.0" transform="rotate(-2 463.3 393.7)"/><ellipse cx="466.2" cy="394.1" rx="1.4" ry="0.6" transform="rotate(18 466.2 394.1)"/><ellipse cx="395.6" cy="165.9" rx="3.8" ry="1.5" transform="rotate(-1 395.6 165.9)"/><ellipse cx="395.9" cy="168.9" rx="3.1" ry="1.5" transform="rotate(-7 395.9 168.9)"/><ellipse cx="398.2" cy="168.3" rx="3.7" ry="1.3" transform="rotate(-7 398.2 168.3)"/><ellipse cx="394.2" cy="168.0" rx="2.3" ry="1.7" transform="rotate(-3 394.2 168.0)"/><ellipse cx="381.0" cy="258.2" rx="1.5" ry="1.1" transform="rotate(29 381.0 258.2)"/><ellipse cx="378.4" cy="258.0" rx="1.6" ry="0.6" transform="rotate(8 378.4 258.0)"/><ellipse cx="378.3" cy="258.5" rx="0.9" ry="0.7" transform="rotate(4 378.3 258.5)"/><ellipse cx="380.6" cy="258.2" rx="0.9" ry="0.6" transform="rotate(33 380.6 258.2)"/><ellipse cx="389.1" cy="223.6" rx="1.7" ry="0.8" transform="rotate(-9 389.1 223.6)"/><ellipse cx="401.7" cy="187.6" rx="4.2" ry="2.2" transform="rotate(82 401.7 187.6)"/><ellipse cx="400.6" cy="184.7" rx="4.3" ry="1.6" transform="rotate(54 400.6 184.7)"/><ellipse cx="401.7" cy="183.8" rx="3.4" ry="1.7" transform="rotate(82 401.7 183.8)"/><ellipse cx="431.4" cy="374.3" rx="3.0" ry="1.9" transform="rotate(54 431.4 374.3)"/><ellipse cx="435.8" cy="338.6" rx="1.7" ry="1.0" transform="rotate(47 435.8 338.6)"/><ellipse cx="432.3" cy="338.0" rx="1.9" ry="1.4" transform="rotate(21 432.3 338.0)"/><ellipse cx="441.3" cy="139.6" rx="4.3" ry="2.3" transform="rotate(42 441.3 139.6)"/><ellipse cx="442.1" cy="137.3" rx="2.6" ry="2.2" transform="rotate(51 442.1 137.3)"/><ellipse cx="448.4" cy="137.6" rx="4.8" ry="2.6" transform="rotate(31 448.4 137.6)"/><ellipse cx="448.5" cy="139.3" rx="4.9" ry="2.4" transform="rotate(33 448.5 139.3)"/><ellipse cx="406.6" cy="268.2" rx="3.0" ry="1.4" transform="rotate(-67 406.6 268.2)"/><ellipse cx="461.0" cy="226.5" rx="2.4" ry="1.8" transform="rotate(-53 461.0 226.5)"/><ellipse cx="463.4" cy="226.7" rx="1.8" ry="1.3" transform="rotate(-37 463.4 226.7)"/><ellipse cx="461.4" cy="226.8" rx="2.7" ry="1.6" transform="rotate(-57 461.4 226.8)"/><ellipse cx="464.9" cy="228.8" rx="3.1" ry="1.1" transform="rotate(-58 464.9 228.8)"/><ellipse cx="468.2" cy="272.9" rx="2.1" ry="1.0" transform="rotate(38 468.2 272.9)"/><ellipse cx="403.9" cy="344.0" rx="1.3" ry="1.0" transform="rotate(13 403.9 344.0)"/><ellipse cx="387.7" cy="147.3" rx="2.3" ry="0.9" transform="rotate(67 387.7 147.3)"/><ellipse cx="383.6" cy="148.5" rx="1.7" ry="0.7" transform="rotate(55 383.6 148.5)"/><ellipse cx="383.7" cy="147.6" rx="1.7" ry="1.0" transform="rotate(64 383.7 147.6)"/><ellipse cx="386.3" cy="147.7" rx="1.4" ry="0.9" transform="rotate(64 386.3 147.7)"/><ellipse cx="463.8" cy="367.7" rx="4.3" ry="2.2" transform="rotate(-11 463.8 367.7)"/><ellipse cx="458.1" cy="179.8" rx="1.2" ry="0.7" transform="rotate(20 458.1 179.8)"/><ellipse cx="436.0" cy="241.1" rx="1.9" ry="1.0" transform="rotate(14 436.0 241.1)"/><ellipse cx="466.6" cy="342.6" rx="3.1" ry="1.4" transform="rotate(42 466.6 342.6)"/><ellipse cx="421.6" cy="305.2" rx="2.1" ry="0.6" transform="rotate(1 421.6 305.2)"/><ellipse cx="447.4" cy="200.8" rx="3.4" ry="1.5" transform="rotate(51 447.4 200.8)"/><ellipse cx="445.4" cy="197.2" rx="3.2" ry="1.1" transform="rotate(75 445.4 197.2)"/><ellipse cx="583.3" cy="301.2" rx="2.1" ry="1.6" transform="rotate(-53 583.3 301.2)"/><ellipse cx="583.7" cy="300.3" rx="2.4" ry="1.6" transform="rotate(-46 583.7 300.3)"/><ellipse cx="582.5" cy="301.0" rx="2.0" ry="0.9" transform="rotate(-29 582.5 301.0)"/><ellipse cx="584.4" cy="301.5" rx="1.7" ry="1.4" transform="rotate(-39 584.4 301.5)"/><ellipse cx="488.6" cy="340.3" rx="2.8" ry="0.9" transform="rotate(-0 488.6 340.3)"/><ellipse cx="486.9" cy="341.6" rx="2.9" ry="1.2" transform="rotate(-2 486.9 341.6)"/><ellipse cx="484.8" cy="341.0" rx="1.4" ry="1.2" transform="rotate(18 484.8 341.0)"/><ellipse cx="483.4" cy="340.1" rx="3.0" ry="1.7" transform="rotate(-3 483.4 340.1)"/><ellipse cx="490.3" cy="267.6" rx="1.6" ry="0.5" transform="rotate(49 490.3 267.6)"/><ellipse cx="610.2" cy="280.3" rx="2.8" ry="1.4" transform="rotate(-26 610.2 280.3)"/><ellipse cx="609.7" cy="282.0" rx="3.2" ry="2.3" transform="rotate(-37 609.7 282.0)"/><ellipse cx="604.8" cy="282.3" rx="2.0" ry="2.2" transform="rotate(-31 604.8 282.3)"/><ellipse cx="536.8" cy="313.8" rx="3.9" ry="1.6" transform="rotate(14 536.8 313.8)"/><ellipse cx="535.6" cy="312.3" rx="3.2" ry="2.1" transform="rotate(14 535.6 312.3)"/><ellipse cx="584.0" cy="364.3" rx="4.0" ry="1.7" transform="rotate(-39 584.0 364.3)"/><ellipse cx="470.1" cy="264.6" rx="1.4" ry="0.4" transform="rotate(21 470.1 264.6)"/><ellipse cx="470.7" cy="264.3" rx="0.9" ry="0.4" transform="rotate(29 470.7 264.3)"/><ellipse cx="510.6" cy="250.9" rx="2.6" ry="1.1" transform="rotate(13 510.6 250.9)"/><ellipse cx="510.9" cy="253.6" rx="2.5" ry="1.3" transform="rotate(21 510.9 253.6)"/><ellipse cx="513.1" cy="252.3" rx="1.9" ry="1.1" transform="rotate(13 513.1 252.3)"/><ellipse cx="511.8" cy="252.4" rx="2.1" ry="1.4" transform="rotate(33 511.8 252.4)"/><ellipse cx="496.6" cy="253.2" rx="1.9" ry="1.0" transform="rotate(42 496.6 253.2)"/><ellipse cx="555.7" cy="318.5" rx="2.2" ry="1.3" transform="rotate(-39 555.7 318.5)"/><ellipse cx="553.9" cy="318.0" rx="2.1" ry="1.0" transform="rotate(-61 553.9 318.0)"/><ellipse cx="556.0" cy="317.8" rx="1.7" ry="1.0" transform="rotate(-35 556.0 317.8)"/><ellipse cx="555.9" cy="318.1" rx="2.7" ry="1.4" transform="rotate(-47 555.9 318.1)"/><ellipse cx="589.1" cy="314.4" rx="4.3" ry="1.4" transform="rotate(25 589.1 314.4)"/><ellipse cx="586.0" cy="317.1" rx="5.0" ry="2.3" transform="rotate(28 586.0 317.1)"/><ellipse cx="593.7" cy="319.8" rx="4.0" ry="1.3" transform="rotate(24 593.7 319.8)"/><ellipse cx="593.0" cy="317.8" rx="2.8" ry="1.8" transform="rotate(-3 593.0 317.8)"/><ellipse cx="615.7" cy="329.8" rx="4.4" ry="1.4" transform="rotate(-57 615.7 329.8)"/><ellipse cx="615.6" cy="326.3" rx="2.7" ry="1.3" transform="rotate(-50 615.6 326.3)"/><ellipse cx="542.8" cy="393.1" rx="1.3" ry="0.7" transform="rotate(65 542.8 393.1)"/><ellipse cx="543.5" cy="393.1" rx="2.6" ry="1.2" transform="rotate(51 543.5 393.1)"/><ellipse cx="542.3" cy="393.4" rx="2.2" ry="0.7" transform="rotate(61 542.3 393.4)"/><ellipse cx="506.0" cy="279.5" rx="1.7" ry="0.9" transform="rotate(-20 506.0 279.5)"/><ellipse cx="507.6" cy="280.3" rx="1.2" ry="0.9" transform="rotate(-44 507.6 280.3)"/><ellipse cx="505.3" cy="280.0" rx="1.2" ry="0.8" transform="rotate(-66 505.3 280.0)"/><ellipse cx="468.3" cy="397.9" rx="2.2" ry="0.9" transform="rotate(-40 468.3 397.9)"/><ellipse cx="466.7" cy="397.9" rx="2.3" ry="1.1" transform="rotate(-16 466.7 397.9)"/><ellipse cx="463.1" cy="397.6" rx="2.9" ry="0.8" transform="rotate(-21 463.1 397.6)"/><ellipse cx="500.6" cy="313.8" rx="2.6" ry="0.9" transform="rotate(20 500.6 313.8)"/><ellipse cx="496.6" cy="313.7" rx="2.7" ry="1.1" transform="rotate(16 496.6 313.7)"/><ellipse cx="466.9" cy="375.5" rx="2.5" ry="1.4" transform="rotate(-8 466.9 375.5)"/><ellipse cx="548.7" cy="262.0" rx="2.1" ry="1.2" transform="rotate(-22 548.7 262.0)"/><ellipse cx="554.3" cy="258.0" rx="4.0" ry="2.4" transform="rotate(-16 554.3 258.0)"/><ellipse cx="552.4" cy="262.5" rx="2.6" ry="1.5" transform="rotate(-4 552.4 262.5)"/><ellipse cx="546.7" cy="262.2" rx="4.2" ry="2.4" transform="rotate(-32 546.7 262.2)"/><ellipse cx="573.5" cy="290.2" rx="2.5" ry="0.8" transform="rotate(30 573.5 290.2)"/><ellipse cx="573.9" cy="290.4" rx="1.2" ry="1.5" transform="rotate(47 573.9 290.4)"/><ellipse cx="610.8" cy="305.0" rx="3.7" ry="1.1" transform="rotate(65 610.8 305.0)"/><ellipse cx="608.7" cy="302.6" rx="3.3" ry="1.0" transform="rotate(76 608.7 302.6)"/><ellipse cx="606.5" cy="303.5" rx="2.9" ry="1.2" transform="rotate(67 606.5 303.5)"/><ellipse cx="607.3" cy="398.2" rx="1.4" ry="0.9" transform="rotate(6 607.3 398.2)"/><ellipse cx="607.9" cy="396.9" rx="2.1" ry="1.1" transform="rotate(8 607.9 396.9)"/><ellipse cx="606.6" cy="398.1" rx="1.1" ry="1.0" transform="rotate(22 606.6 398.1)"/><ellipse cx="596.7" cy="276.0" rx="2.1" ry="1.1" transform="rotate(73 596.7 276.0)"/><ellipse cx="597.0" cy="277.4" rx="1.6" ry="1.6" transform="rotate(84 597.0 277.4)"/><ellipse cx="595.3" cy="277.1" rx="1.6" ry="0.9" transform="rotate(57 595.3 277.1)"/><ellipse cx="595.2" cy="277.6" rx="2.4" ry="1.5" transform="rotate(84 595.2 277.6)"/><ellipse cx="470.1" cy="264.2" rx="1.2" ry="0.9" transform="rotate(47 470.1 264.2)"/><ellipse cx="469.4" cy="265.1" rx="1.2" ry="0.5" transform="rotate(29 469.4 265.1)"/><ellipse cx="472.1" cy="264.0" rx="1.1" ry="0.5" transform="rotate(35 472.1 264.0)"/><ellipse cx="472.1" cy="265.6" rx="1.1" ry="0.8" transform="rotate(18 472.1 265.6)"/><ellipse cx="535.8" cy="345.1" rx="2.1" ry="1.1" transform="rotate(23 535.8 345.1)"/><ellipse cx="460.6" cy="320.3" rx="1.9" ry="1.2" transform="rotate(26 460.6 320.3)"/><ellipse cx="464.3" cy="320.8" rx="1.7" ry="1.0" transform="rotate(17 464.3 320.8)"/><ellipse cx="530.4" cy="386.4" rx="1.6" ry="1.5" transform="rotate(27 530.4 386.4)"/><ellipse cx="531.2" cy="389.9" rx="2.2" ry="1.4" transform="rotate(5 531.2 389.9)"/><ellipse cx="526.3" cy="386.7" rx="2.6" ry="1.1" transform="rotate(20 526.3 386.7)"/><ellipse cx="530.8" cy="389.0" rx="1.3" ry="1.0" transform="rotate(8 530.8 389.0)"/><ellipse cx="485.3" cy="266.1" rx="2.4" ry="2.6" transform="rotate(-2 485.3 266.1)"/><ellipse cx="466.4" cy="356.3" rx="2.1" ry="1.6" transform="rotate(-40 466.4 356.3)"/><ellipse cx="494.6" cy="256.4" rx="3.3" ry="2.0" transform="rotate(-5 494.6 256.4)"/><ellipse cx="493.5" cy="256.6" rx="1.9" ry="1.0" transform="rotate(-5 493.5 256.6)"/><ellipse cx="499.4" cy="258.9" rx="3.4" ry="1.2" transform="rotate(16 499.4 258.9)"/><ellipse cx="496.2" cy="257.0" rx="2.2" ry="1.1" transform="rotate(0 496.2 257.0)"/><ellipse cx="609.3" cy="339.8" rx="2.1" ry="1.0" transform="rotate(-42 609.3 339.8)"/><ellipse cx="607.6" cy="338.2" rx="2.3" ry="1.0" transform="rotate(-16 607.6 338.2)"/><ellipse cx="523.9" cy="305.6" rx="1.7" ry="1.1" transform="rotate(-47 523.9 305.6)"/><ellipse cx="524.7" cy="306.6" rx="1.4" ry="1.0" transform="rotate(-58 524.7 306.6)"/><ellipse cx="531.3" cy="303.8" rx="3.2" ry="1.2" transform="rotate(-15 531.3 303.8)"/><ellipse cx="532.2" cy="302.8" rx="2.5" ry="1.7" transform="rotate(19 532.2 302.8)"/><ellipse cx="528.2" cy="306.9" rx="3.0" ry="1.7" transform="rotate(5 528.2 306.9)"/><ellipse cx="627.6" cy="327.8" rx="1.7" ry="1.8" transform="rotate(61 627.6 327.8)"/><ellipse cx="630.0" cy="331.6" rx="3.4" ry="1.3" transform="rotate(38 630.0 331.6)"/><ellipse cx="625.4" cy="330.0" rx="3.4" ry="1.5" transform="rotate(14 625.4 330.0)"/><ellipse cx="532.0" cy="262.3" rx="2.5" ry="1.7" transform="rotate(-39 532.0 262.3)"/><ellipse cx="507.2" cy="268.1" rx="2.8" ry="1.1" transform="rotate(-73 507.2 268.1)"/><ellipse cx="535.5" cy="275.0" rx="4.1" ry="2.0" transform="rotate(69 535.5 275.0)"/><ellipse cx="532.5" cy="271.3" rx="3.7" ry="1.9" transform="rotate(56 532.5 271.3)"/><ellipse cx="533.0" cy="274.6" rx="3.8" ry="2.5" transform="rotate(72 533.0 274.6)"/><ellipse cx="477.7" cy="270.9" rx="0.9" ry="0.5" transform="rotate(68 477.7 270.9)"/><ellipse cx="477.2" cy="272.0" rx="0.8" ry="0.6" transform="rotate(61 477.2 272.0)"/><ellipse cx="542.4" cy="308.3" rx="3.7" ry="2.2" transform="rotate(-65 542.4 308.3)"/><ellipse cx="544.9" cy="305.0" rx="3.3" ry="1.6" transform="rotate(-52 544.9 305.0)"/><ellipse cx="481.4" cy="271.6" rx="1.5" ry="0.7" transform="rotate(-53 481.4 271.6)"/><ellipse cx="481.3" cy="269.7" rx="2.0" ry="1.1" transform="rotate(-48 481.3 269.7)"/><ellipse cx="477.8" cy="269.6" rx="1.2" ry="0.7" transform="rotate(-50 477.8 269.6)"/><ellipse cx="481.0" cy="270.6" rx="1.1" ry="0.8" transform="rotate(-83 481.0 270.6)"/><ellipse cx="567.1" cy="359.5" rx="3.9" ry="1.8" transform="rotate(87 567.1 359.5)"/><ellipse cx="574.5" cy="360.5" rx="3.6" ry="1.3" transform="rotate(66 574.5 360.5)"/><ellipse cx="571.8" cy="360.3" rx="3.2" ry="2.3" transform="rotate(73 571.8 360.3)"/><ellipse cx="568.8" cy="357.2" rx="2.0" ry="1.4" transform="rotate(45 568.8 357.2)"/><ellipse cx="591.9" cy="258.1" rx="2.7" ry="2.0" transform="rotate(-39 591.9 258.1)"/><ellipse cx="597.1" cy="261.0" rx="2.1" ry="1.5" transform="rotate(-24 597.1 261.0)"/><ellipse cx="591.2" cy="260.5" rx="1.7" ry="1.6" transform="rotate(-43 591.2 260.5)"/><ellipse cx="591.3" cy="261.1" rx="3.9" ry="1.1" transform="rotate(-33 591.3 261.1)"/><ellipse cx="520.5" cy="328.7" rx="1.1" ry="0.7" transform="rotate(-25 520.5 328.7)"/><ellipse cx="520.0" cy="328.9" rx="1.8" ry="1.0" transform="rotate(-41 520.0 328.9)"/><ellipse cx="517.6" cy="329.1" rx="1.1" ry="0.7" transform="rotate(-20 517.6 329.1)"/><ellipse cx="562.5" cy="372.8" rx="1.3" ry="0.9" transform="rotate(-23 562.5 372.8)"/><ellipse cx="561.3" cy="372.5" rx="1.8" ry="0.8" transform="rotate(-20 561.3 372.5)"/><ellipse cx="539.4" cy="254.6" rx="3.2" ry="1.1" transform="rotate(-70 539.4 254.6)"/><ellipse cx="540.8" cy="257.2" rx="3.1" ry="1.0" transform="rotate(-82 540.8 257.2)"/><ellipse cx="538.8" cy="255.3" rx="2.4" ry="1.4" transform="rotate(-40 538.8 255.3)"/><ellipse cx="539.7" cy="255.0" rx="2.3" ry="1.2" transform="rotate(-62 539.7 255.0)"/><ellipse cx="625.3" cy="354.8" rx="3.3" ry="1.8" transform="rotate(40 625.3 354.8)"/><ellipse cx="628.8" cy="352.2" rx="3.8" ry="1.9" transform="rotate(29 628.8 352.2)"/><ellipse cx="615.9" cy="259.0" rx="1.9" ry="1.7" transform="rotate(-56 615.9 259.0)"/><ellipse cx="612.8" cy="258.0" rx="3.0" ry="1.3" transform="rotate(-78 612.8 258.0)"/><ellipse cx="618.0" cy="257.0" rx="2.7" ry="1.6" transform="rotate(-46 618.0 257.0)"/><ellipse cx="614.8" cy="257.3" rx="3.2" ry="1.4" transform="rotate(-59 614.8 257.3)"/><ellipse cx="476.0" cy="317.6" rx="1.2" ry="1.0" transform="rotate(-67 476.0 317.6)"/><ellipse cx="475.0" cy="315.1" rx="1.5" ry="0.9" transform="rotate(-57 475.0 315.1)"/><ellipse cx="532.0" cy="341.9" rx="3.4" ry="2.3" transform="rotate(37 532.0 341.9)"/><ellipse cx="532.9" cy="340.3" rx="2.4" ry="2.6" transform="rotate(54 532.9 340.3)"/><ellipse cx="625.0" cy="393.5" rx="2.2" ry="1.1" transform="rotate(-13 625.0 393.5)"/><ellipse cx="626.2" cy="356.6" rx="2.4" ry="1.5" transform="rotate(29 626.2 356.6)"/><ellipse cx="627.1" cy="356.1" rx="3.2" ry="1.0" transform="rotate(24 627.1 356.1)"/><ellipse cx="629.2" cy="359.3" rx="3.2" ry="1.7" transform="rotate(55 629.2 359.3)"/><ellipse cx="599.0" cy="335.5" rx="1.3" ry="1.0" transform="rotate(-39 599.0 335.5)"/><ellipse cx="538.1" cy="349.3" rx="3.8" ry="1.9" transform="rotate(-3 538.1 349.3)"/><ellipse cx="536.7" cy="349.9" rx="2.7" ry="1.8" transform="rotate(-16 536.7 349.9)"/><ellipse cx="533.9" cy="348.9" rx="2.6" ry="1.3" transform="rotate(-32 533.9 348.9)"/><ellipse cx="534.8" cy="350.9" rx="3.3" ry="2.1" transform="rotate(-10 534.8 350.9)"/><ellipse cx="463.4" cy="379.4" rx="1.7" ry="1.7" transform="rotate(-6 463.4 379.4)"/><ellipse cx="465.9" cy="382.0" rx="3.0" ry="1.6" transform="rotate(31 465.9 382.0)"/><ellipse cx="468.0" cy="381.6" rx="3.8" ry="1.5" transform="rotate(-8 468.0 381.6)"/><ellipse cx="560.8" cy="347.6" rx="3.6" ry="2.6" transform="rotate(-14 560.8 347.6)"/><ellipse cx="568.8" cy="347.3" rx="4.7" ry="1.8" transform="rotate(1 568.8 347.3)"/><ellipse cx="564.5" cy="343.0" rx="2.8" ry="1.7" transform="rotate(5 564.5 343.0)"/><ellipse cx="530.1" cy="292.4" rx="1.9" ry="1.6" transform="rotate(3 530.1 292.4)"/><ellipse cx="473.9" cy="236.5" rx="3.3" ry="1.2" transform="rotate(-39 473.9 236.5)"/><ellipse cx="477.5" cy="236.3" rx="2.6" ry="1.0" transform="rotate(-46 477.5 236.3)"/><ellipse cx="475.8" cy="238.6" rx="3.1" ry="1.6" transform="rotate(-34 475.8 238.6)"/><ellipse cx="608.2" cy="245.1" rx="1.1" ry="0.7" transform="rotate(-19 608.2 245.1)"/><ellipse cx="608.3" cy="244.3" rx="1.1" ry="0.6" transform="rotate(-45 608.3 244.3)"/><ellipse cx="538.8" cy="248.4" rx="2.8" ry="1.3" transform="rotate(-25 538.8 248.4)"/><ellipse cx="614.6" cy="260.0" rx="3.7" ry="1.7" transform="rotate(57 614.6 260.0)"/><ellipse cx="617.3" cy="258.1" rx="3.5" ry="1.8" transform="rotate(73 617.3 258.1)"/><ellipse cx="612.7" cy="261.2" rx="3.6" ry="2.0" transform="rotate(74 612.7 261.2)"/><ellipse cx="550.6" cy="225.9" rx="1.9" ry="1.0" transform="rotate(51 550.6 225.9)"/><ellipse cx="535.6" cy="230.4" rx="1.4" ry="0.7" transform="rotate(47 535.6 230.4)"/><ellipse cx="534.8" cy="230.4" rx="2.3" ry="1.1" transform="rotate(26 534.8 230.4)"/><ellipse cx="536.5" cy="232.7" rx="1.9" ry="0.8" transform="rotate(21 536.5 232.7)"/><ellipse cx="253.1" cy="87.2" rx="0.9" ry="0.5" transform="rotate(-27 253.1 87.2)"/><ellipse cx="161.6" cy="118.7" rx="1.9" ry="0.9" transform="rotate(-24 161.6 118.7)"/><ellipse cx="161.2" cy="121.5" rx="3.2" ry="1.8" transform="rotate(-34 161.2 121.5)"/><ellipse cx="160.5" cy="119.1" rx="3.2" ry="0.9" transform="rotate(-46 160.5 119.1)"/><ellipse cx="123.8" cy="122.5" rx="1.2" ry="1.1" transform="rotate(38 123.8 122.5)"/><ellipse cx="167.8" cy="89.3" rx="0.8" ry="0.6" transform="rotate(58 167.8 89.3)"/><ellipse cx="121.5" cy="102.1" rx="1.4" ry="1.0" transform="rotate(52 121.5 102.1)"/><ellipse cx="120.8" cy="101.7" rx="2.2" ry="1.0" transform="rotate(40 120.8 101.7)"/><ellipse cx="118.5" cy="104.4" rx="2.4" ry="1.4" transform="rotate(57 118.5 104.4)"/><ellipse cx="123.1" cy="102.0" rx="2.2" ry="1.4" transform="rotate(48 123.1 102.0)"/><ellipse cx="121.9" cy="78.2" rx="0.8" ry="0.4" transform="rotate(-24 121.9 78.2)"/><ellipse cx="121.7" cy="79.9" rx="1.1" ry="0.6" transform="rotate(-14 121.7 79.9)"/><ellipse cx="120.3" cy="79.1" rx="1.1" ry="0.4" transform="rotate(8 120.3 79.1)"/><ellipse cx="121.0" cy="79.7" rx="0.7" ry="0.6" transform="rotate(-0 121.0 79.7)"/><ellipse cx="232.2" cy="90.8" rx="1.0" ry="0.7" transform="rotate(55 232.2 90.8)"/><ellipse cx="233.9" cy="90.3" rx="1.6" ry="0.9" transform="rotate(26 233.9 90.3)"/><ellipse cx="232.7" cy="88.8" rx="1.4" ry="0.9" transform="rotate(37 232.7 88.8)"/><ellipse cx="231.0" cy="89.9" rx="0.8" ry="0.7" transform="rotate(16 231.0 89.9)"/><ellipse cx="176.0" cy="116.1" rx="2.8" ry="1.3" transform="rotate(-11 176.0 116.1)"/><ellipse cx="174.1" cy="117.6" rx="1.4" ry="0.9" transform="rotate(-27 174.1 117.6)"/><ellipse cx="175.9" cy="116.4" rx="2.9" ry="1.4" transform="rotate(12 175.9 116.4)"/><ellipse cx="176.7" cy="116.5" rx="1.8" ry="1.6" transform="rotate(-2 176.7 116.5)"/><ellipse cx="206.2" cy="107.8" rx="0.6" ry="0.4" transform="rotate(-38 206.2 107.8)"/><ellipse cx="206.5" cy="107.2" rx="1.2" ry="0.5" transform="rotate(-23 206.5 107.2)"/><ellipse cx="147.2" cy="95.2" rx="0.8" ry="0.6" transform="rotate(-28 147.2 95.2)"/><ellipse cx="149.3" cy="94.7" rx="1.1" ry="0.5" transform="rotate(-35 149.3 94.7)"/><ellipse cx="147.9" cy="95.7" rx="1.2" ry="0.8" transform="rotate(-56 147.9 95.7)"/><ellipse cx="149.9" cy="95.2" rx="0.8" ry="0.6" transform="rotate(-58 149.9 95.2)"/><ellipse cx="133.5" cy="74.8" rx="2.7" ry="1.1" transform="rotate(-76 133.5 74.8)"/><ellipse cx="137.5" cy="72.5" rx="2.2" ry="1.3" transform="rotate(-77 137.5 72.5)"/><ellipse cx="198.8" cy="85.1" rx="1.8" ry="0.7" transform="rotate(-73 198.8 85.1)"/><ellipse cx="199.7" cy="86.0" rx="1.0" ry="0.5" transform="rotate(-74 199.7 86.0)"/><ellipse cx="199.5" cy="85.2" rx="1.7" ry="0.9" transform="rotate(-79 199.5 85.2)"/><ellipse cx="142.9" cy="117.3" rx="2.7" ry="0.9" transform="rotate(-49 142.9 117.3)"/><ellipse cx="143.3" cy="115.9" rx="1.4" ry="1.4" transform="rotate(-73 143.3 115.9)"/><ellipse cx="141.7" cy="115.3" rx="1.5" ry="0.9" transform="rotate(-74 141.7 115.3)"/><ellipse cx="188.9" cy="149.0" rx="1.7" ry="1.0" transform="rotate(-15 188.9 149.0)"/><ellipse cx="188.7" cy="150.2" rx="1.4" ry="0.8" transform="rotate(9 188.7 150.2)"/><ellipse cx="189.3" cy="148.4" rx="2.1" ry="1.0" transform="rotate(16 189.3 148.4)"/><ellipse cx="190.9" cy="148.6" rx="1.2" ry="1.0" transform="rotate(-3 190.9 148.6)"/><ellipse cx="166.1" cy="147.6" rx="1.5" ry="1.0" transform="rotate(-71 166.1 147.6)"/><ellipse cx="220.5" cy="200.5" rx="2.0" ry="1.1" transform="rotate(20 220.5 200.5)"/><ellipse cx="222.5" cy="201.6" rx="1.2" ry="1.0" transform="rotate(16 222.5 201.6)"/><ellipse cx="218.6" cy="202.8" rx="1.2" ry="1.1" transform="rotate(7 218.6 202.8)"/><ellipse cx="190.9" cy="250.2" rx="0.8" ry="0.5" transform="rotate(-71 190.9 250.2)"/><ellipse cx="189.0" cy="249.4" rx="0.8" ry="0.6" transform="rotate(-88 189.0 249.4)"/><ellipse cx="189.9" cy="249.6" rx="0.9" ry="0.6" transform="rotate(-64 189.9 249.6)"/><ellipse cx="189.4" cy="250.3" rx="0.9" ry="0.4" transform="rotate(-67 189.4 250.3)"/><ellipse cx="237.1" cy="133.5" rx="1.3" ry="0.8" transform="rotate(-29 237.1 133.5)"/><ellipse cx="239.0" cy="133.6" rx="1.9" ry="1.1" transform="rotate(-0 239.0 133.6)"/><ellipse cx="235.5" cy="134.0" rx="2.0" ry="1.1" transform="rotate(-29 235.5 134.0)"/><ellipse cx="236.8" cy="135.1" rx="1.7" ry="1.3" transform="rotate(-16 236.8 135.1)"/><ellipse cx="204.6" cy="174.8" rx="2.4" ry="1.4" transform="rotate(9 204.6 174.8)"/><ellipse cx="205.6" cy="173.1" rx="3.2" ry="0.8" transform="rotate(-36 205.6 173.1)"/><ellipse cx="206.1" cy="173.8" rx="1.4" ry="1.0" transform="rotate(-14 206.1 173.8)"/><ellipse cx="206.3" cy="172.8" rx="1.6" ry="0.8" transform="rotate(-36 206.3 172.8)"/><ellipse cx="165.2" cy="188.6" rx="1.7" ry="1.2" transform="rotate(12 165.2 188.6)"/><ellipse cx="160.1" cy="189.5" rx="2.2" ry="1.0" transform="rotate(12 160.1 189.5)"/><ellipse cx="226.6" cy="160.9" rx="1.5" ry="0.7" transform="rotate(-9 226.6 160.9)"/><ellipse cx="116.5" cy="131.9" rx="1.7" ry="0.7" transform="rotate(-44 116.5 131.9)"/><ellipse cx="88.7" cy="95.9" rx="0.8" ry="0.4" transform="rotate(-73 88.7 95.9)"/><ellipse cx="73.9" cy="269.2" rx="1.6" ry="0.9" transform="rotate(-20 73.9 269.2)"/><ellipse cx="74.8" cy="267.9" rx="0.9" ry="0.7" transform="rotate(-23 74.8 267.9)"/><ellipse cx="83.4" cy="137.3" rx="1.4" ry="0.6" transform="rotate(83 83.4 137.3)"/><ellipse cx="81.1" cy="136.5" rx="2.2" ry="0.9" transform="rotate(54 81.1 136.5)"/><ellipse cx="80.1" cy="137.8" rx="2.3" ry="0.8" transform="rotate(52 80.1 137.8)"/><ellipse cx="83.7" cy="136.1" rx="2.2" ry="1.0" transform="rotate(63 83.7 136.1)"/><ellipse cx="109.9" cy="76.0" rx="0.9" ry="0.6" transform="rotate(30 109.9 76.0)"/><ellipse cx="110.1" cy="76.4" rx="0.9" ry="0.6" transform="rotate(9 110.1 76.4)"/><ellipse cx="109.4" cy="76.1" rx="1.3" ry="0.5" transform="rotate(47 109.4 76.1)"/><ellipse cx="110.5" cy="75.4" rx="1.0" ry="0.5" transform="rotate(41 110.5 75.4)"/></g>
<polyline points="113,283 135,318 160,352 190,396" fill="none" stroke="#8d8a85" stroke-width="5" stroke-opacity="0.16" stroke-dasharray="1,1.5"/>
<polyline points="60,170 90,230 120,300 150,380" fill="none" stroke="#8d8a85" stroke-width="3" stroke-opacity="0.12" stroke-dasharray="1.5,2"/>
<g fill="none" stroke="#9d968f" stroke-width="0.9" stroke-dasharray="3,2.2"><polyline points="34.0,128.3 470.0,128.3"/><polyline points="113.0,128.3 113.0,283.0"/><polyline points="254.0,128.3 254.0,395.6"/><polyline points="366.7,128.3 375.0,395.6"/><polyline points="548.0,212.0 461.0,309.0 461.0,392.0"/><polyline points="154.9,395.6 154.9,534.0"/><polyline points="60.0,455.0 100.0,457.0 154.9,458.0"/><polyline points="53.4,534.0 198.0,534.0"/><polyline points="167.0,396.0 172.0,430.0 185.0,462.0 200.0,482.0 215.0,478.0 239.6,477.0"/><polyline points="239.6,477.0 334.0,477.0"/><polyline points="198.0,534.0 198.0,628.0"/><polyline points="239.6,477.0 239.6,553.0"/><polyline points="198.0,535.0 239.6,535.0"/><polyline points="239.6,553.0 338.0,553.0"/><polyline points="267.0,553.0 267.0,723.0"/><polyline points="197.0,626.8 267.8,626.8"/><polyline points="267.8,624.0 351.8,624.0"/><polyline points="120.0,534.0 120.0,585.0 192.0,640.0 188.0,701.0"/><polyline points="338.0,396.0 338.0,553.0"/><polyline points="338.0,459.0 442.0,459.0"/><polyline points="434.0,396.0 438.0,430.0 442.0,459.0 442.0,507.5"/><polyline points="338.0,517.0 405.0,516.0 442.0,520.0"/><polyline points="338.0,553.0 364.4,553.0 364.4,627.0"/><polyline points="331.0,627.0 470.0,627.0"/><polyline points="364.0,561.7 453.0,561.7"/><polyline points="470.0,561.7 470.0,627.0"/><polyline points="442.0,507.5 515.7,507.5"/><polyline points="442.0,507.0 448.0,535.0 453.0,561.0"/><polyline points="515.7,507.5 520.0,530.0 514.0,561.0"/><polyline points="495.0,456.0 506.0,442.0"/><polyline points="495.0,456.0 505.0,490.0 517.0,514.0 517.0,525.6 567.0,525.6"/><polyline points="570.0,540.0 570.0,609.0"/><polyline points="606.0,540.0 606.0,600.0"/><polyline points="514.0,561.0 525.4,592.0 542.0,625.6 540.0,660.0 520.0,693.6"/><polyline points="539.0,632.5 631.0,632.5"/><polyline points="351.8,635.0 395.0,635.0"/><polyline points="351.8,627.0 351.8,711.7"/><polyline points="331.0,711.7 351.8,711.7"/><polyline points="395.0,635.0 400.0,660.0 440.0,668.0 477.0,665.0 477.0,736.7"/><polyline points="470.0,635.0 534.0,635.0"/><polyline points="477.0,693.6 517.0,693.6"/><polyline points="557.6,632.0 557.6,728.0"/><polyline points="600.6,632.0 600.6,728.0"/><polyline points="560.0,728.0 631.0,728.0"/><polyline points="570.0,609.0 590.0,622.0 610.0,610.0 631.0,600.0"/><polyline points="517.0,693.6 510.0,715.0 487.0,725.0 490.0,738.0"/></g>
<g fill="none" stroke="#bab4ad" stroke-width="0.7" stroke-dasharray="2,2"><polyline points="303.0,716.0 300.0,760.0 320.0,800.0 350.0,830.0"/><polyline points="250.0,760.0 290.0,790.0 330.0,780.0"/><polyline points="356.0,747.0 360.0,800.0 380.0,850.0 400.0,880.0"/><polyline points="400.0,791.0 395.0,840.0 410.0,890.0"/></g>
<g fill="none" stroke="#76726d" stroke-width="1.6"><polyline points="47.0,396.0 461.6,395.6 462.0,388.0 470.0,400.6 490.0,403.3 500.0,410.0 513.3,413.3 536.7,416.7 556.7,410.0 605.0,438.3 615.0,450.0 631.0,468.0"/><polyline points="184.0,705.0 239.6,723.0 278.5,723.0 278.5,715.6 303.5,715.6 328.5,744.0 348.0,760.6 356.0,746.7 375.7,749.5 400.7,791.0 411.8,805.0 428.5,807.8"/></g>
<g font-family="Liberation Sans" font-size="12" fill="#615653" stroke="#615653" stroke-width="0.3" text-anchor="middle" letter-spacing="0.2"><text x="188" y="263.3">ALBERTA</text><text x="436" y="265.3">MANITOBA</text><text x="70.3" y="311.0">BRITISH</text><text x="70" y="324.3">COLUMBIA</text><text x="310.3" y="317.0">SASKATCHEWAN</text><text x="563.7" y="319.3">ONTARIO</text><text x="109.5" y="437.6">WASHINGTON</text><text x="262" y="440.3">MONTANA</text><text x="386.7" y="430.3">NORTH DAKOTA</text><text x="470.8" y="455.0">MINNESOTA</text><text x="389" y="492.0">SOUTH DAKOTA</text><text x="539.5" y="489.6">WISCONSIN</text><text x="200.5" y="511.3">IDAHO</text><text x="286.7" y="518.6">WYOMING</text><text x="483.7" y="526.6">IOWA</text><text x="399.5" y="548.3">NEBRASKA</text><text x="541.8" y="568.0">ILLINOIS</text><text x="156" y="575.3">NEVADA</text><text x="233" y="587.6">UTAH</text><text x="586.3" y="587.6">INDIANA</text><text x="315.8" y="605.0">COLORADO</text><text x="417" y="605.0">KANSAS</text><text x="505" y="615.0">MISSOURI</text><text x="600" y="625.0">KENTUCKY</text><text x="128.7" y="647.0">CALIFORNIA</text><text x="433.7" y="652.0">OKLAHOMA</text><text x="578.8" y="649.6">TENNESSEE</text><text x="495.2" y="674.3">ARKANSAS</text><text x="230" y="674.3">ARIZONA</text><text x="310.8" y="681.0">NEW MEXICO</text><text x="578.7" y="706.3">ALABAMA</text><text x="414.7" y="723.3">TEXAS</text><text x="534.3" y="723.3">MISSISSIPPI</text><text x="615" y="723.3">GEOR</text><text x="507.3" y="738.3">LOUISIANA</text><text x="624" y="563.3">O</text><text x="605" y="514.0">MICHIGA</text></g>
<g font-family="Liberation Sans" font-weight="bold" fill="#111" text-anchor="middle"><text x="364.8" y="201.5" font-size="20" letter-spacing="2">CANADA</text><text x="412.2" y="580" font-size="20" letter-spacing="1.6">UNITED STATES</text><text x="372.7" y="874" font-size="13" letter-spacing="1.8">MEXICO</text><text x="503" y="975" font-size="12" letter-spacing="2">GUATE</text><text x="511" y="999" font-size="12" letter-spacing="2.5">EL SA</text></g>
<text x="594.7" y="149" text-anchor="middle" font-family="Liberation Sans" font-size="13" fill="#4d6cc4" letter-spacing="1.3">Hudson B</text>
<text x="405" y="929.5" text-anchor="middle" font-family="Liberation Sans" font-size="18.5" fill="#555">Mexico City</text>
<circle cx="405.7" cy="907.7" r="1.6" fill="#e03030"/>
<g font-family="Liberation Sans" font-size="12" fill="#6280c8" letter-spacing="2.5"><text x="509" y="814">Gulf of</text><text x="509" y="831">Mexico</text></g>
<g fill="rgb(60,200,100)" fill-opacity="0.2"><circle cx="197" cy="346" r="22"/><circle cx="80.8" cy="393" r="22"/><circle cx="116.4" cy="420" r="22"/><circle cx="128.7" cy="418.8" r="22"/><circle cx="80.8" cy="423" r="22"/><circle cx="84.5" cy="428.2" r="22"/><circle cx="76.8" cy="434.1" r="22"/><circle cx="121.5" cy="447" r="22"/><circle cx="215" cy="447.9" r="22"/><circle cx="300.3" cy="460.6" r="22"/><circle cx="69.7" cy="459.3" r="22"/><circle cx="69.7" cy="467.2" r="22"/><circle cx="108.5" cy="462.7" r="22"/><circle cx="100" cy="466" r="22"/><circle cx="100.8" cy="488.2" r="22"/><circle cx="128.7" cy="490" r="22"/><circle cx="121.5" cy="494.9" r="22"/><circle cx="106.7" cy="501.6" r="22"/><circle cx="126.7" cy="506.3" r="22"/><circle cx="187.5" cy="496.8" r="22"/><circle cx="93.7" cy="535.7" r="22"/><circle cx="82.9" cy="570.1" r="22"/><circle cx="164.2" cy="594.9" r="22"/><circle cx="87.8" cy="600.8" r="22"/><circle cx="107.1" cy="595.6" r="22"/><circle cx="108.6" cy="608.9" r="22"/><circle cx="86.3" cy="619.3" r="22"/><circle cx="89.3" cy="623.8" r="22"/><circle cx="101.9" cy="626" r="22"/><circle cx="104.1" cy="656.1" r="22"/><circle cx="163.5" cy="660.8" r="22"/><circle cx="139" cy="660.8" r="22"/><circle cx="152.3" cy="669.4" r="22"/><circle cx="146.4" cy="674.2" r="22"/><circle cx="136" cy="677.9" r="22"/><circle cx="145.7" cy="686.8" r="22"/><circle cx="188.7" cy="685.8" r="22"/><circle cx="237.6" cy="642.3" r="22"/><circle cx="252.4" cy="654.9" r="22"/><circle cx="238.3" cy="677.9" r="22"/><circle cx="216.1" cy="690.2" r="22"/><circle cx="225" cy="688.3" r="22"/><circle cx="86.8" cy="559" r="22"/><circle cx="100" cy="480" r="24"/><circle cx="95" cy="500" r="22"/><circle cx="105" cy="492" r="20"/><circle cx="100" cy="486" r="18"/><circle cx="110" cy="640" r="22"/><circle cx="125" cy="680" r="24"/><circle cx="140" cy="690" r="22"/><circle cx="150" cy="700" r="20"/><circle cx="145" cy="678" r="22"/><circle cx="152" cy="688" r="20"/><circle cx="138" cy="668" r="20"/><circle cx="145" cy="684" r="16"/><circle cx="150" cy="676" r="16"/><circle cx="90" cy="610" r="22"/><circle cx="88" cy="618" r="18"/><circle cx="80" cy="615" r="22"/><circle cx="95" cy="608" r="22"/><circle cx="105" cy="622" r="20"/><circle cx="88" cy="630" r="20"/><circle cx="92" cy="620" r="16"/><circle cx="230" cy="680" r="20"/><circle cx="245" cy="665" r="22"/><circle cx="232" cy="688" r="20"/></g>
<g fill="none" stroke="#23a046" stroke-width="1.9" stroke-linejoin="round"><polyline points="197.0,346.0 128.7,418.8"/><polyline points="80.8,393.0 116.4,420.0"/><polyline points="80.8,393.0 114.9,405.5 123.0,424.5 128.7,418.8"/><polyline points="80.8,423.0 114.9,405.5"/><polyline points="80.8,423.0 188.3,408.9 214.9,447.9 232.7,471.9 300.3,460.6"/><polyline points="84.5,428.2 93.4,437.8 116.4,420.0"/><polyline points="87.4,440.0 121.5,445.2"/><polyline points="87.4,440.0 121.5,447.0 191.2,422.3 214.9,447.9"/><polyline points="76.8,434.1 50.4,443.7 104.0,656.0"/><polyline points="76.8,434.1 128.7,418.8"/><polyline points="121.5,447.0 139.3,486.0 128.7,490.0"/><polyline points="69.7,459.3 107.5,462.3"/><polyline points="69.7,467.2 84.5,469.0 108.5,462.7 123.0,472.7 129.0,490.0"/><polyline points="100.8,488.2 56.3,489.0 82.9,570.1"/><polyline points="56.3,491.0 86.3,619.3"/><polyline points="100.8,488.2 128.7,490.0 121.5,494.9"/><polyline points="214.9,447.9 163.1,510.5 129.0,490.0"/><polyline points="187.5,496.8 169.0,480.8 109.7,507.5"/><polyline points="71.1,426.0 69.7,458.6 84.5,469.0 84.5,424.5 77.1,431.9"/><polyline points="100.8,488.2 100.8,537.2"/><polyline points="93.7,535.7 109.7,535.7 105.2,492.7"/><polyline points="57.8,492.7 99.3,488.2"/><polyline points="78.5,442.3 123.0,482.3 131.9,507.5"/><polyline points="93.7,535.7 86.8,559.0 82.9,570.1"/><polyline points="86.3,619.3 112.0,605.0 95.0,640.0 130.0,625.0 101.9,626.0"/><polyline points="89.3,623.8 80.0,632.0 120.0,660.0 108.6,608.9"/><polyline points="87.8,600.8 75.0,630.0 104.1,656.1 140.0,640.0"/><polyline points="106.7,501.6 145.7,686.8"/><polyline points="100.8,488.2 136.0,677.9"/><polyline points="121.5,494.9 237.6,642.3"/><polyline points="128.7,490.0 252.4,654.9"/><polyline points="82.9,570.1 220.3,609.7 237.6,642.3"/><polyline points="107.1,595.6 220.3,609.7 252.4,654.9"/><polyline points="164.2,594.9 205.0,640.8 163.5,660.8"/><polyline points="164.2,594.9 220.3,609.7"/><polyline points="82.9,570.1 180.5,662.3 136.0,677.9"/><polyline points="82.9,570.1 152.3,650.5 106.4,663.8 104.1,656.1"/><polyline points="87.8,600.8 127.1,603.0 84.1,628.2 93.0,634.2 139.0,660.8"/><polyline points="146.4,669.7 213.1,669.7 252.4,654.9"/><polyline points="146.4,678.6 201.3,672.7 216.1,690.2"/><polyline points="152.3,702.4 188.7,700.1 225.0,688.3"/><polyline points="188.7,685.8 204.2,696.4 238.3,677.9"/><polyline points="225.0,644.5 251.7,632.7 241.3,689.0 229.4,646.0 237.6,642.3"/><polyline points="216.1,690.2 252.4,654.9"/><polyline points="163.5,660.8 229.4,660.8 238.3,677.9"/><polyline points="145.7,686.8 86.3,619.3"/><polyline points="152.3,669.4 94.5,611.9"/><polyline points="136.0,677.9 82.6,603.0"/><polyline points="104.1,656.1 144.9,647.5 152.3,669.4"/><polyline points="87.8,600.8 108.6,608.9 145.7,686.8"/></g>
<g fill="#1d4a2b"><circle cx="197" cy="346" r="3.7"/><circle cx="80.8" cy="393" r="3.7"/><circle cx="116.4" cy="420" r="3.7"/><circle cx="128.7" cy="418.8" r="3.7"/><circle cx="80.8" cy="423" r="3.7"/><circle cx="84.5" cy="428.2" r="3.7"/><circle cx="76.8" cy="434.1" r="3.7"/><circle cx="121.5" cy="447" r="3.7"/><circle cx="215" cy="447.9" r="3.7"/><circle cx="300.3" cy="460.6" r="3.7"/><circle cx="69.7" cy="459.3" r="3.7"/><circle cx="69.7" cy="467.2" r="3.7"/><circle cx="108.5" cy="462.7" r="3.7"/><circle cx="100" cy="466" r="3.7"/><circle cx="100.8" cy="488.2" r="3.7"/><circle cx="128.7" cy="490" r="3.7"/><circle cx="121.5" cy="494.9" r="3.7"/><circle cx="106.7" cy="501.6" r="3.7"/><circle cx="126.7" cy="506.3" r="3.7"/><circle cx="187.5" cy="496.8" r="3.7"/><circle cx="93.7" cy="535.7" r="3.7"/><circle cx="82.9" cy="570.1" r="3.7"/><circle cx="164.2" cy="594.9" r="3.7"/><circle cx="87.8" cy="600.8" r="3.7"/><circle cx="107.1" cy="595.6" r="3.7"/><circle cx="108.6" cy="608.9" r="3.7"/><circle cx="86.3" cy="619.3" r="3.7"/><circle cx="89.3" cy="623.8" r="3.7"/><circle cx="101.9" cy="626" r="3.7"/><circle cx="104.1" cy="656.1" r="3.7"/><circle cx="163.5" cy="660.8" r="3.7"/><circle cx="139" cy="660.8" r="3.7"/><circle cx="152.3" cy="669.4" r="3.7"/><circle cx="146.4" cy="674.2" r="3.7"/><circle cx="136" cy="677.9" r="3.7"/><circle cx="145.7" cy="686.8" r="3.7"/><circle cx="188.7" cy="685.8" r="3.7"/><circle cx="237.6" cy="642.3" r="3.7"/><circle cx="252.4" cy="654.9" r="3.7"/><circle cx="238.3" cy="677.9" r="3.7"/><circle cx="216.1" cy="690.2" r="3.7"/><circle cx="225" cy="688.3" r="3.7"/><circle cx="86.8" cy="559" r="3.7"/></g>
</svg>
<svg class="abs" style="left:0;top:0" width="40" height="90" viewBox="34 70 40 90">
<g fill="#131a28"><circle cx="50.5" cy="86.2" r="12.5"/><circle cx="50.5" cy="115" r="12.5"/><circle cx="50.5" cy="141.2" r="12.5"/></g>
<g stroke="#fff" stroke-width="1.4"><path d="M46.5,86.2h8M50.5,82.2v8M46.5,115h8"/></g>
<path d="M50.5,135.7l-4.2,4.3h2.5v5.2h3.4v-5.2h2.5z" fill="none" stroke="#fff" stroke-width="1.1"/></svg>
<div class="abs" style="left:401px;top:0;width:196px;height:40px;background:rgba(0,0,12,0.53);border-right:1px solid rgba(200,210,230,0.45);border-top:1px solid rgba(200,205,215,0.35)">
<span class="abs" style="left:12px;top:12px;font-size:15px;color:#cdd1d8;white-space:nowrap">Select a Criteria</span>
<svg class="abs" style="left:168px;top:15px" width="14" height="9"><path d="M1,1.5L7,7.3L13,1.5" fill="none" stroke="#d6d9de" stroke-width="1.5"/></svg></div>
<div class="abs" style="left:493px;top:731px;width:104px;height:268px;background:rgba(35,43,58,0.93);border-right:1px solid rgba(120,130,145,0.6)"><div class="abs" style="left:15px;top:15px;width:21px;height:21px;border-radius:5px;background:#8088f6"><svg class="abs" style="left:0;top:0" width="21" height="21"><path d="M5.5,10.5L9,14L15.5,6.5" fill="none" stroke="#111" stroke-width="1.5"/></svg></div><span class="abs" style="left:44px;top:17px;font-size:15px;color:#eaeaea;white-space:nowrap">500KV</span><div class="abs" style="left:15px;top:51px;width:21px;height:21px;border-radius:5px;background:#1e2534;border:1.5px solid #4d5566"></div><span class="abs" style="left:44px;top:53px;font-size:15px;color:#eaeaea;white-space:nowrap">345KV</span><div class="abs" style="left:15px;top:87px;width:21px;height:21px;border-radius:5px;background:#1e2534;border:1.5px solid #4d5566"></div><span class="abs" style="left:44px;top:89px;font-size:15px;color:#eaeaea;white-space:nowrap">287KV</span><div class="abs" style="left:15px;top:123px;width:21px;height:21px;border-radius:5px;background:#1e2534;border:1.5px solid #4d5566"></div><span class="abs" style="left:44px;top:125px;font-size:15px;color:#eaeaea;white-space:nowrap">230kV</span><div class="abs" style="left:15px;top:159px;width:21px;height:21px;border-radius:5px;background:#1e2534;border:1.5px solid #4d5566"></div><span class="abs" style="left:44px;top:161px;font-size:15px;color:#eaeaea;white-space:nowrap">138KV</span><div class="abs" style="left:15px;top:195px;width:21px;height:21px;border-radius:5px;background:#1e2534;border:1.5px solid #4d5566"></div><span class="abs" style="left:44px;top:197px;font-size:15px;color:#eaeaea;white-space:nowrap">115kV</span><div class="abs" style="left:15px;top:231px;width:21px;height:21px;border-radius:5px;background:#1e2534;border:1.5px solid #4d5566"></div><span class="abs" style="left:44px;top:233px;font-size:15px;color:#eaeaea;white-space:nowrap">20KV</span></div>
</div>
<div class="abs" style="left:1px;top:545px;width:42px;height:42px;background:#8088f6;border-radius:0 6px 6px 0">
<svg class="abs" style="left:0;top:0" width="42" height="42"><g stroke="#000" stroke-width="3" stroke-linecap="round"><path d="M9.5,12.5H34.3M9.5,20.5H34.3M9.5,28.5H34.3"/></g></svg></div>
<div class="panel" style="left:641px;top:70px;width:591px;height:517px"></div>
<svg class="abs" style="left:641px;top:70px" width="591" height="517" viewBox="641 70 591 517">
<polygon points="922.0,175.6 1040.8,224.8 1090.0,343.6 1040.8,462.4 922.0,511.6 803.2,462.4 754.0,343.6 803.2,224.8" fill="#a31118" stroke="#f01010" stroke-width="1.5"/>
<polygon points="922.0,203.1 1012.2,253.4 1042.4,343.6 1031.5,453.1 922.0,483.8 802.9,462.7 877.6,343.6 802.9,224.5" fill="#a31118" stroke="#1c1a8c" stroke-width="1.5"/>
<polygon points="922.0,236.8 988.5,277.1 1009.1,343.6 1007.8,429.4 922.0,450.9 802.9,462.7 887.8,343.6 802.9,224.5" fill="#8e6a1f" stroke="#f2dc10" stroke-width="1.5"/>
<polygon points="922.0,273.6 965.1,300.5 975.6,343.6 984.2,405.8 922.0,417.9 802.9,462.7 887.8,343.6 802.9,224.5" fill="#12561d" stroke="#2aa018" stroke-width="1.5"/>
<g stroke="rgba(255,255,255,0.09)" stroke-width="1"><polygon points="922.0,276.4 969.5,296.1 989.2,343.6 969.5,391.1 922.0,410.8 874.5,391.1 854.8,343.6 874.5,296.1" fill="none"/><polygon points="922.0,242.8 993.3,272.3 1022.8,343.6 993.3,414.9 922.0,444.4 850.7,414.9 821.2,343.6 850.7,272.3" fill="none"/><polygon points="922.0,209.2 1017.0,248.6 1056.4,343.6 1017.0,438.6 922.0,478.0 827.0,438.6 787.6,343.6 827.0,248.6" fill="none"/><polygon points="922.0,175.6 1040.8,224.8 1090.0,343.6 1040.8,462.4 922.0,511.6 803.2,462.4 754.0,343.6 803.2,224.8" fill="none"/><line x1="922.0" y1="343.6" x2="922.0" y2="175.6"/><line x1="922.0" y1="343.6" x2="1040.8" y2="224.8"/><line x1="922.0" y1="343.6" x2="1090.0" y2="343.6"/><line x1="922.0" y1="343.6" x2="1040.8" y2="462.4"/><line x1="922.0" y1="343.6" x2="922.0" y2="511.6"/><line x1="922.0" y1="343.6" x2="803.2" y2="462.4"/><line x1="922.0" y1="343.6" x2="754.0" y2="343.6"/><line x1="922.0" y1="343.6" x2="803.2" y2="224.8"/></g>
<polygon points="922.0,310.0 945.8,319.8 955.6,343.6 945.8,367.4 922.0,377.2 898.2,367.4 888.4,343.6 898.2,319.8" fill="#ff0000" stroke="#000" stroke-width="1.5"/>
<g font-family="Liberation Sans" font-size="12" font-weight="bold" fill="#e8e8e8" text-anchor="middle" stroke="rgba(0,0,0,0.25)" stroke-width="0.5"><text x="922.0" y="314.3">0%</text><text x="922.0" y="280.7">5%</text><text x="922.0" y="247.1">10%</text><text x="922.0" y="213.5">15%</text><text x="922.0" y="179.9">20%</text></g>
<g font-family="Liberation Sans" font-size="10.6" font-weight="bold" fill="#e4e4e4"><text x="922" y="163" text-anchor="middle">Line Loading</text><text x="1042" y="221" text-anchor="start">Tranformer Loading</text><text x="1091" y="347" text-anchor="start">Generator Loading</text><text x="1042" y="473" text-anchor="start">Excitation Limiter</text><text x="922" y="523" text-anchor="middle">Low/High Voltage</text><text x="802.5" y="473" text-anchor="end">VSA Module</text><text x="752.5" y="347" text-anchor="end">TSA Module</text><text x="802.5" y="221" text-anchor="end">SSR Module</text></g>
<text x="936.6" y="97" text-anchor="middle" font-family="Liberation Sans" font-size="18" font-weight="bold" fill="#f01313">System status : Critical</text>
<text x="1185.2" y="103.9" text-anchor="middle" font-family="Liberation Sans" font-size="8.6" font-weight="bold" fill="#dde">4/12/2024 07:15:09</text>
<g transform="translate(1185.4,85.3)" fill="none" stroke="#858cf2" stroke-width="1.7" stroke-linecap="round">
<path d="M-5.5,-1.5 A5.8,5.8 0 0 1 5,-3"/><path d="M5.5,1.5 A5.8,5.8 0 0 1 -5,3"/>
<path d="M5.6,-6.8 L5.3,-2.6 L1.3,-3.2" /><path d="M-5.6,6.8 L-5.3,2.6 L-1.3,3.2"/></g>
</svg>
<div class="panel" style="left:641px;top:597px;width:591px;height:472px"></div>
<svg class="abs" style="left:641px;top:597px" width="591" height="472" viewBox="641 597 591 472">
<defs><filter id="sh" x="-20%" y="-20%" width="140%" height="160%"><feDropShadow dx="0" dy="1" stdDeviation="1.2" flood-color="#000" flood-opacity="0.5"/></filter></defs>
<g stroke="#3a4251" stroke-width="1"><line x1="676.7" y1="679.5" x2="676.7" y2="1035"/><line x1="765.7" y1="679.5" x2="765.7" y2="1035"/><line x1="854.6" y1="679.5" x2="854.6" y2="1035"/><line x1="943.5" y1="679.5" x2="943.5" y2="1035"/><line x1="1032.5" y1="679.5" x2="1032.5" y2="1035"/><line x1="1121.5" y1="679.5" x2="1121.5" y2="1035"/><line x1="1210.4" y1="679.5" x2="1210.4" y2="1035"/><line x1="669" y1="1029.5" x2="1210.4" y2="1029.5"/><line x1="669" y1="979.5" x2="1210.4" y2="979.5"/><line x1="669" y1="929.5" x2="1210.4" y2="929.5"/><line x1="669" y1="879.5" x2="1210.4" y2="879.5"/><line x1="669" y1="829.5" x2="1210.4" y2="829.5"/><line x1="669" y1="779.5" x2="1210.4" y2="779.5"/><line x1="669" y1="729.5" x2="1210.4" y2="729.5"/><line x1="669" y1="679.5" x2="1210.4" y2="679.5"/></g>
<g font-family="Liberation Sans" font-size="12" font-weight="bold" fill="#aeb1b6"><text x="666" y="1033.8" text-anchor="end">-1</text><text x="666" y="983.8" text-anchor="end">0</text><text x="666" y="933.8" text-anchor="end">1</text><text x="666" y="883.8" text-anchor="end">2</text><text x="666" y="833.8" text-anchor="end">3</text><text x="666" y="783.8" text-anchor="end">4</text><text x="666" y="733.8" text-anchor="end">5</text><text x="666" y="683.8" text-anchor="end">6</text><text x="676.7" y="1051" text-anchor="middle">10</text><text x="765.7" y="1051" text-anchor="middle">15</text><text x="854.6" y="1051" text-anchor="middle">20</text><text x="943.5" y="1051" text-anchor="middle">25</text><text x="1032.5" y="1051" text-anchor="middle">30</text><text x="1121.5" y="1051" text-anchor="middle">35</text><text x="1210.4" y="1051" text-anchor="middle">40</text></g>
<g fill="none" stroke-width="2.3" stroke-linejoin="round">
<path d="M676.7,698.0 C678.5,702.6 683.5,716.2 687.4,725.5 C691.2,734.8 695.1,744.5 699.8,753.5 C704.5,762.5 710.0,770.4 715.7,779.5 C721.3,788.6 728.3,800.2 733.6,808.0 C739.0,815.8 742.5,819.9 747.9,826.5 C753.2,833.1 759.7,841.3 765.7,847.5 C771.6,853.7 776.0,857.8 783.4,863.5 C790.9,869.2 802.1,877.0 810.1,882.0 C818.1,887.0 824.1,889.9 831.5,893.5 C838.9,897.1 846.9,899.0 854.6,903.5 C862.3,908.0 872.4,915.5 877.7,920.5 C883.1,925.5 883.7,928.2 886.6,933.5 C889.6,938.8 892.8,946.3 895.5,952.0 C898.2,957.7 900.3,964.0 902.6,967.5 C905.0,971.0 907.1,973.2 909.7,973.0 C912.4,972.8 914.7,968.9 918.6,966.0 C922.6,963.1 929.3,957.9 933.4,955.5 C937.6,953.1 940.5,952.5 943.5,951.5 C946.6,950.5 948.0,950.2 951.6,949.5 C955.1,948.8 959.8,947.9 964.9,947.5 C970.0,947.1 975.3,946.8 982.2,947.0 C989.0,947.2 994.5,947.7 1005.8,948.5 C1017.2,949.3 1031.0,950.4 1050.3,952.0 C1069.6,953.6 1102.2,956.5 1121.5,958.0 C1140.7,959.5 1151.1,960.1 1165.9,961.0 C1180.8,961.9 1203.0,963.1 1210.4,963.5" stroke="#14b8a6"/>
<path d="M676.7,698.0 C678.5,702.6 683.5,716.2 687.4,725.5 C691.2,734.8 695.1,744.5 699.8,753.5 C704.5,762.5 710.0,770.4 715.7,779.5 C721.3,788.6 728.3,800.2 733.6,808.0 C739.0,815.8 742.5,819.9 747.9,826.5 C753.2,833.1 759.7,841.3 765.7,847.5 C771.6,853.7 776.0,857.8 783.4,863.5 C790.9,869.2 802.1,877.0 810.1,882.0 C818.1,887.0 824.1,889.9 831.5,893.5 C838.9,897.1 846.9,899.8 854.6,903.5 C862.3,907.2 872.4,911.7 877.7,915.5 C883.1,919.3 883.7,921.8 886.6,926.5 C889.6,931.2 892.6,937.6 895.5,943.5 C898.5,949.4 901.2,957.2 904.4,962.0 C907.6,966.8 911.3,971.2 914.6,972.0 C917.8,972.8 920.8,968.7 924.0,966.5 C927.1,964.3 930.1,961.0 933.4,959.0 C936.7,957.0 940.5,955.9 943.5,954.5 C946.6,953.1 948.0,951.6 951.6,950.5 C955.1,949.4 959.8,948.6 964.9,948.0 C970.0,947.4 975.3,946.9 982.2,947.0 C989.0,947.1 994.5,947.8 1005.8,948.5 C1017.2,949.2 1031.0,950.0 1050.3,951.5 C1069.6,953.0 1102.2,956.0 1121.5,957.5 C1140.7,959.0 1151.1,959.6 1165.9,960.5 C1180.8,961.4 1203.0,962.6 1210.4,963.0" stroke="#ec4899"/>
<path d="M676.7,698.0 C678.5,702.6 683.5,716.2 687.4,725.5 C691.2,734.8 695.1,744.5 699.8,753.5 C704.5,762.5 710.0,770.4 715.7,779.5 C721.3,788.6 728.3,800.2 733.6,808.0 C739.0,815.8 742.5,819.9 747.9,826.5 C753.2,833.1 759.7,841.3 765.7,847.5 C771.6,853.7 776.0,857.8 783.4,863.5 C790.9,869.2 802.1,877.0 810.1,882.0 C818.1,887.0 824.1,889.9 831.5,893.5 C838.9,897.1 846.9,900.2 854.6,903.5 C862.3,906.8 870.3,910.3 877.7,913.5 C885.1,916.7 892.3,919.7 899.1,922.5 C905.9,925.3 912.9,928.1 918.6,930.5 C924.4,932.9 929.3,934.7 933.4,937.0 C937.6,939.3 940.5,942.2 943.5,944.5 C946.6,946.8 948.6,946.0 951.6,951.0 C954.5,956.0 958.2,966.6 961.3,974.5 C964.5,982.4 967.3,992.5 970.2,998.5 C973.2,1004.5 976.5,1009.3 979.1,1010.5 C981.8,1011.7 983.6,1008.6 986.2,1005.5 C988.9,1002.4 992.5,996.0 995.1,992.0 C997.8,988.0 999.0,985.4 1002.3,981.5 C1005.5,977.6 1009.7,971.8 1014.7,968.5 C1019.8,965.2 1026.6,963.1 1032.5,961.5 C1038.4,959.9 1041.4,959.5 1050.3,959.0 C1059.2,958.5 1074.0,958.2 1085.9,958.5 C1097.7,958.8 1108.1,959.7 1121.5,960.5 C1134.8,961.3 1151.1,962.5 1165.9,963.5 C1180.8,964.5 1203.0,966.0 1210.4,966.5" stroke="#22c55e"/>
<path d="M676.7,691.0 C678.5,695.8 683.5,709.9 687.4,719.5 C691.2,729.1 695.1,739.2 699.8,748.5 C704.5,757.8 710.0,766.2 715.7,775.5 C721.3,784.8 728.3,796.5 733.6,804.5 C739.0,812.5 742.5,816.8 747.9,823.5 C753.2,830.2 759.7,838.3 765.7,844.5 C771.6,850.7 776.0,854.7 783.4,860.5 C790.9,866.3 802.1,874.3 810.1,879.5 C818.1,884.7 824.1,887.8 831.5,891.5 C838.9,895.2 846.9,898.2 854.6,901.5 C862.3,904.8 870.3,908.3 877.7,911.5 C885.1,914.7 892.3,917.7 899.1,920.5 C905.9,923.3 912.9,926.0 918.6,928.5 C924.4,931.0 929.3,933.2 933.4,935.5 C937.6,937.8 940.5,939.9 943.5,942.5 C946.6,945.1 948.6,946.1 951.6,951.0 C954.5,955.9 958.2,965.0 961.3,972.0 C964.5,979.0 967.6,988.1 970.2,993.0 C972.9,997.9 975.0,1000.6 977.4,1001.5 C979.7,1002.4 981.8,1001.2 984.5,998.5 C987.1,995.8 990.4,989.5 993.4,985.5 C996.3,981.5 998.7,978.0 1002.3,974.5 C1005.8,971.0 1009.7,967.1 1014.7,964.5 C1019.8,961.9 1026.6,960.2 1032.5,959.0 C1038.4,957.8 1041.4,957.2 1050.3,957.0 C1059.2,956.8 1074.0,956.9 1085.9,957.5 C1097.7,958.1 1108.1,959.7 1121.5,960.5 C1134.8,961.3 1151.1,961.8 1165.9,962.5 C1180.8,963.2 1203.0,964.6 1210.4,965.0" stroke="#6366f1"/>
<path d="M676.7,691.0 C678.5,695.8 683.5,709.9 687.4,719.5 C691.2,729.1 695.1,739.2 699.8,748.5 C704.5,757.8 710.0,766.2 715.7,775.5 C721.3,784.8 728.3,796.5 733.6,804.5 C739.0,812.5 742.5,816.8 747.9,823.5 C753.2,830.2 759.7,838.3 765.7,844.5 C771.6,850.7 776.0,854.7 783.4,860.5 C790.9,866.3 802.1,874.3 810.1,879.5 C818.1,884.7 824.1,887.8 831.5,891.5 C838.9,895.2 846.9,898.2 854.6,901.5 C862.3,904.8 870.3,908.3 877.7,911.5 C885.1,914.7 892.3,917.7 899.1,920.5 C905.9,923.3 912.9,926.0 918.6,928.5 C924.4,931.0 929.3,933.2 933.4,935.5 C937.6,937.8 940.5,939.9 943.5,942.5 C946.6,945.1 948.6,946.5 951.6,951.0 C954.5,955.5 958.2,963.3 961.3,969.5 C964.5,975.7 967.9,983.9 970.2,988.0 C972.6,992.1 973.6,993.3 975.6,994.0 C977.5,994.7 979.1,994.2 981.8,992.0 C984.5,989.8 988.2,984.3 991.6,980.5 C995.0,976.7 998.4,972.2 1002.3,969.0 C1006.1,965.8 1009.7,963.5 1014.7,961.5 C1019.8,959.5 1026.6,958.0 1032.5,957.0 C1038.4,956.0 1041.4,955.6 1050.3,955.5 C1059.2,955.4 1074.0,955.8 1085.9,956.5 C1097.7,957.2 1108.1,958.6 1121.5,959.5 C1134.8,960.4 1151.1,961.2 1165.9,962.0 C1180.8,962.8 1203.0,964.1 1210.4,964.5" stroke="#3b82f6"/>
</g>
<line x1="943.5" y1="929" x2="943.5" y2="980" stroke="#dc3a2e" stroke-width="2"/>
<circle cx="943.5" cy="964.4" r="5" fill="#1f8a3c"/>
<g font-family="Liberation Sans" font-size="8.1" fill="#d6d6d6"><circle cx="672" cy="646.3" r="7.5" fill="#1f8a3c"/><circle cx="672" cy="646.3" r="2" fill="#151c28"/><text x="679.8" y="649.2">T</text><circle cx="700.7" cy="646.3" r="5" fill="none" stroke="#dc2626" stroke-width="1.8"/><text x="708.5" y="649.2">Dm</text><circle cx="737.6" cy="646.3" r="5" fill="none" stroke="#3b82f6" stroke-width="1.8"/><text x="745.4" y="649.2">Base</text><circle cx="779.2" cy="646.3" r="5" fill="none" stroke="#22c55e" stroke-width="1.8"/><text x="787" y="649.2">lne_4001_8001_1</text><circle cx="867.4" cy="646.3" r="5" fill="none" stroke="#a855f7" stroke-width="1.8"/><text x="875.2" y="649.2">lne_4001_4204_1</text><circle cx="955.6" cy="646.3" r="5" fill="none" stroke="#ec4899" stroke-width="1.8"/><text x="963.4" y="649.2">lne_4001_4097_1</text><circle cx="1043.4" cy="646.3" r="5" fill="none" stroke="#14b8a6" stroke-width="1.8"/><text x="1051.3" y="649.2">lne_4001_4094_1</text><circle cx="1131.6" cy="646.3" r="5" fill="none" stroke="#f97316" stroke-width="1.8"/><text x="1139.4" y="649.2">lne_4001_4090_1</text><circle cx="858" cy="666.3" r="5" fill="none" stroke="#6366f1" stroke-width="1.8"/><text x="865.8" y="669.2">lne_3906_4001_2</text><circle cx="945.6" cy="666.3" r="5" fill="none" stroke="#818cf8" stroke-width="1.8"/><text x="953.4" y="669.2">lne_3906_4001_1</text></g>
<text x="935.9" y="623" text-anchor="middle" font-family="Liberation Sans" font-size="12" font-weight="bold" fill="#e2e2e2">sym_4031_H</text>
<text x="1185.2" y="631" text-anchor="middle" font-family="Liberation Sans" font-size="8.6" font-weight="bold" fill="#dde">4/12/2024 07:15:09</text>
<g transform="translate(1185.4,611.9)" fill="none" stroke="#858cf2" stroke-width="1.7" stroke-linecap="round">
<path d="M-5.5,-1.5 A5.8,5.8 0 0 1 5,-3"/><path d="M5.5,1.5 A5.8,5.8 0 0 1 -5,3"/>
<path d="M5.6,-6.8 L5.3,-2.6 L1.3,-3.2" /><path d="M-5.6,6.8 L-5.3,2.6 L-1.3,3.2"/></g>
<rect x="647" y="604" width="42" height="24" rx="2" fill="#1c2331" filter="url(#sh)"/><line x1="661.6" y1="611.3" x2="675.7" y2="611.3" stroke="#7f86ee" stroke-width="2"/><line x1="661.6" y1="616.3" x2="675.7" y2="616.3" stroke="#7f86ee" stroke-width="2"/><line x1="661.6" y1="621" x2="675.7" y2="621" stroke="#7f86ee" stroke-width="2"/>
</svg>
<div class="panel" style="left:1242px;top:70px;width:590px;height:495px"></div>
<svg class="abs" style="left:1242px;top:70px" width="590" height="495" viewBox="1242 70 590 495">
<rect x="1495" y="99.3" width="84" height="22.5" rx="4" fill="#8088f6"/>
<text x="1537" y="114.6" text-anchor="middle" font-family="Liberation Sans" font-size="11" font-weight="bold" fill="#1b1d3c">North-Central</text>
<text x="1296.5" y="141.9" text-anchor="end" font-family="Liberation Sans" font-size="13" fill="#ececec">VSA</text>
<rect x="1303" y="129.2" width="432.0" height="32.4" fill="#0b9020"/>
<rect x="1735" y="129.2" width="34.0" height="32.4" fill="#dca30b"/>
<rect x="1769" y="129.2" width="34.2" height="32.4" fill="#a31118"/>
<text x="1679" y="149.9" text-anchor="middle" font-family="Liberation Sans" font-size="12" font-weight="bold" fill="#fff">2369</text>
<text x="1754.5" y="149.9" text-anchor="middle" font-family="Liberation Sans" font-size="12" font-weight="bold" fill="#fff">2556</text>
<line x1="1303.7" y1="155" x2="1303.7" y2="168.5" stroke="#c8c8c8" stroke-width="1.3"/>
<line x1="1428.6" y1="155" x2="1428.6" y2="168.5" stroke="#c8c8c8" stroke-width="1.3"/>
<line x1="1552.7" y1="155" x2="1552.7" y2="168.5" stroke="#c8c8c8" stroke-width="1.3"/>
<line x1="1678" y1="155" x2="1678" y2="168.5" stroke="#c8c8c8" stroke-width="1.3"/>
<line x1="1802" y1="155" x2="1802" y2="168.5" stroke="#c8c8c8" stroke-width="1.3"/>
<text x="1297.4" y="189.0" font-family="Liberation Sans" font-size="13.5" fill="#c4c6ca">984.2</text>
<text x="1421.7" y="189.0" font-family="Liberation Sans" font-size="13.5" fill="#c4c6ca">1669.2</text>
<text x="1546.7" y="189.0" font-family="Liberation Sans" font-size="13.5" fill="#c4c6ca">2354.2</text>
<text x="1671" y="189.0" font-family="Liberation Sans" font-size="13.5" fill="#c4c6ca">3039.2</text>
<text x="1773.3" y="189.0" font-family="Liberation Sans" font-size="13.5" fill="#c4c6ca">3726.0</text>
<text x="1296.5" y="240.1" text-anchor="end" font-family="Liberation Sans" font-size="13" fill="#ececec">TSA</text>
<rect x="1303" y="227" width="500.2" height="32.8" fill="#a31118"/>
<line x1="1303.7" y1="252.9" x2="1303.7" y2="266" stroke="#c8c8c8" stroke-width="1.3"/>
<line x1="1428.6" y1="252.9" x2="1428.6" y2="266" stroke="#c8c8c8" stroke-width="1.3"/>
<line x1="1552.7" y1="252.9" x2="1552.7" y2="266" stroke="#c8c8c8" stroke-width="1.3"/>
<line x1="1678" y1="252.9" x2="1678" y2="266" stroke="#c8c8c8" stroke-width="1.3"/>
<line x1="1802" y1="252.9" x2="1802" y2="266" stroke="#c8c8c8" stroke-width="1.3"/>
<text x="1297.4" y="286.8" font-family="Liberation Sans" font-size="13.5" fill="#c4c6ca">984.2</text>
<text x="1421.7" y="286.8" font-family="Liberation Sans" font-size="13.5" fill="#c4c6ca">1669.2</text>
<text x="1546.7" y="286.8" font-family="Liberation Sans" font-size="13.5" fill="#c4c6ca">2354.2</text>
<text x="1671" y="286.8" font-family="Liberation Sans" font-size="13.5" fill="#c4c6ca">3039.2</text>
<text x="1773.3" y="286.8" font-family="Liberation Sans" font-size="13.5" fill="#c4c6ca">3726.0</text>
<rect x="1495" y="352" width="84" height="22.5" rx="4" fill="#8088f6"/>
<text x="1537" y="367.3" text-anchor="middle" font-family="Liberation Sans" font-size="11" font-weight="bold" fill="#1b1d3c">Central-South</text>
<text x="1296.5" y="394.8" text-anchor="end" font-family="Liberation Sans" font-size="13" fill="#ececec">VSA</text>
<rect x="1303" y="382" width="427.0" height="32.7" fill="#0b9020"/>
<rect x="1730" y="382" width="37.3" height="32.7" fill="#dca30b"/>
<rect x="1767.3" y="382" width="35.9" height="32.7" fill="#a31118"/>
<text x="1674" y="402.9" text-anchor="middle" font-family="Liberation Sans" font-size="12" font-weight="bold" fill="#fff">4015</text>
<text x="1752.2" y="402.9" text-anchor="middle" font-family="Liberation Sans" font-size="12" font-weight="bold" fill="#fff">4359</text>
<line x1="1303.7" y1="408" x2="1303.7" y2="421.4" stroke="#c8c8c8" stroke-width="1.3"/>
<line x1="1428.6" y1="408" x2="1428.6" y2="421.4" stroke="#c8c8c8" stroke-width="1.3"/>
<line x1="1552.7" y1="408" x2="1552.7" y2="421.4" stroke="#c8c8c8" stroke-width="1.3"/>
<line x1="1678" y1="408" x2="1678" y2="421.4" stroke="#c8c8c8" stroke-width="1.3"/>
<line x1="1802" y1="408" x2="1802" y2="421.4" stroke="#c8c8c8" stroke-width="1.3"/>
<text x="1297.4" y="442.2" font-family="Liberation Sans" font-size="13.5" fill="#c4c6ca">2180.9</text>
<text x="1421.7" y="442.2" font-family="Liberation Sans" font-size="13.5" fill="#c4c6ca">3355.9</text>
<text x="1546.7" y="442.2" font-family="Liberation Sans" font-size="13.5" fill="#c4c6ca">4530.9</text>
<text x="1671" y="442.2" font-family="Liberation Sans" font-size="13.5" fill="#c4c6ca">5705.9</text>
<text x="1773.3" y="442.2" font-family="Liberation Sans" font-size="13.5" fill="#c4c6ca">6884.0</text>
<text x="1296.5" y="493.0" text-anchor="end" font-family="Liberation Sans" font-size="13" fill="#ececec">TSA</text>
<rect x="1303" y="480" width="354.0" height="32.6" fill="#0b9020"/>
<rect x="1657" y="480" width="73.0" height="32.6" fill="#dca30b"/>
<rect x="1730" y="480" width="73.2" height="32.6" fill="#a31118"/>
<text x="1604.2" y="500.8" text-anchor="middle" font-family="Liberation Sans" font-size="12" font-weight="bold" fill="#fff">806</text>
<text x="1720" y="500.8" text-anchor="middle" font-family="Liberation Sans" font-size="12" font-weight="bold" fill="#fff">972</text>
<line x1="1303.7" y1="505.7" x2="1303.7" y2="519" stroke="#c8c8c8" stroke-width="1.3"/>
<line x1="1428.6" y1="505.7" x2="1428.6" y2="519" stroke="#c8c8c8" stroke-width="1.3"/>
<line x1="1552.7" y1="505.7" x2="1552.7" y2="519" stroke="#c8c8c8" stroke-width="1.3"/>
<line x1="1678" y1="505.7" x2="1678" y2="519" stroke="#c8c8c8" stroke-width="1.3"/>
<line x1="1802" y1="505.7" x2="1802" y2="519" stroke="#c8c8c8" stroke-width="1.3"/>
<text x="1297.4" y="539.8" font-family="Liberation Sans" font-size="13.5" fill="#c4c6ca">2180.9</text>
<text x="1421.7" y="539.8" font-family="Liberation Sans" font-size="13.5" fill="#c4c6ca">3355.9</text>
<text x="1546.7" y="539.8" font-family="Liberation Sans" font-size="13.5" fill="#c4c6ca">4530.9</text>
<text x="1671" y="539.8" font-family="Liberation Sans" font-size="13.5" fill="#c4c6ca">5705.9</text>
<text x="1773.3" y="539.8" font-family="Liberation Sans" font-size="13.5" fill="#c4c6ca">6884.0</text>
</svg>
<div class="panel" style="left:1242px;top:575px;width:590px;height:494px"></div>
<svg class="abs" style="left:1242px;top:575px" width="590" height="494" viewBox="1242 575 590 494">
<defs><filter id="sh2" x="-20%" y="-20%" width="140%" height="160%"><feDropShadow dx="0" dy="1" stdDeviation="1.2" flood-color="#000" flood-opacity="0.5"/></filter></defs>
<g stroke="#3a4251" stroke-width="1"><line x1="1289" y1="1028.7" x2="1820.8" y2="1028.7"/><line x1="1289" y1="979.9" x2="1820.8" y2="979.9"/><line x1="1289" y1="931.2" x2="1820.8" y2="931.2"/><line x1="1289" y1="882.4" x2="1820.8" y2="882.4"/><line x1="1289" y1="833.6" x2="1820.8" y2="833.6"/><line x1="1289" y1="784.8" x2="1820.8" y2="784.8"/><line x1="1289" y1="736.1" x2="1820.8" y2="736.1"/><line x1="1289" y1="687.3" x2="1820.8" y2="687.3"/><line x1="1289" y1="638.5" x2="1820.8" y2="638.5"/><line x1="1297.4" y1="638" x2="1297.4" y2="1037"/><line x1="1471.4" y1="638" x2="1471.4" y2="1037"/><line x1="1646.4" y1="638" x2="1646.4" y2="1037"/></g>
<rect x="1354.4" y="638.5" width="20.1" height="390.2" fill="#3b82f6"/>
<rect x="1374.5" y="638.5" width="19.8" height="390.2" fill="#ec4899"/>
<rect x="1394.3" y="930.0" width="19.9" height="98.7" fill="#22c55e"/>
<rect x="1529" y="638.5" width="20.2" height="390.2" fill="#3b82f6"/>
<rect x="1549.2" y="665.2" width="19.8" height="363.5" fill="#ec4899"/>
<rect x="1569" y="930.0" width="19.9" height="98.7" fill="#22c55e"/>
<rect x="1704" y="882.7" width="20.0" height="146.0" fill="#3b82f6"/>
<rect x="1724" y="931.2" width="19.4" height="97.5" fill="#ec4899"/>
<rect x="1743.4" y="930.0" width="20.1" height="98.7" fill="#22c55e"/>
<g font-family="Liberation Sans" font-size="12" font-weight="bold" fill="#aeb1b6"><text x="1286" y="1033.0" text-anchor="end">0</text><text x="1286" y="984.2" text-anchor="end">500</text><text x="1286" y="935.5" text-anchor="end">1,000</text><text x="1286" y="886.7" text-anchor="end">1,500</text><text x="1286" y="837.9" text-anchor="end">2,000</text><text x="1286" y="789.1" text-anchor="end">2,500</text><text x="1286" y="740.4" text-anchor="end">3,000</text><text x="1286" y="691.6" text-anchor="end">3,500</text><text x="1286" y="642.8" text-anchor="end">4,000</text><text x="1384.6" y="1051" text-anchor="middle">Thermal</text><text x="1559.3" y="1051" text-anchor="middle">VSA</text><text x="1734" y="1051" text-anchor="middle">TSAT</text></g>
<text x="1537.4" y="601" text-anchor="middle" font-family="Liberation Sans" font-size="12" font-weight="bold" fill="#e2e2e2">North-Central</text>
<g font-family="Liberation Sans" font-size="8.2" fill="#d6d6d6"><circle cx="1474.3" cy="624.1" r="5.4" fill="#3b82f6"/><text x="1482.5" y="627">Offline</text><circle cx="1521.5" cy="624.1" r="5.4" fill="#ec4899"/><text x="1529.4" y="627">Online</text><circle cx="1568.7" cy="624.1" r="5.4" fill="#22c55e"/><text x="1576.9" y="627">Current</text></g>
<text x="1785.8" y="609" text-anchor="middle" font-family="Liberation Sans" font-size="8.6" font-weight="bold" fill="#dde">4/12/2024 07:15:09</text>
<g transform="translate(1785.9,589.5)" fill="none" stroke="#858cf2" stroke-width="1.7" stroke-linecap="round">
<path d="M-5.5,-1.5 A5.8,5.8 0 0 1 5,-3"/><path d="M5.5,1.5 A5.8,5.8 0 0 1 -5,3"/>
<path d="M5.6,-6.8 L5.3,-2.6 L1.3,-3.2" /><path d="M-5.6,6.8 L-5.3,2.6 L-1.3,3.2"/></g>
<rect x="1255.5" y="589" width="41" height="23.5" rx="2" fill="#1c2331" filter="url(#sh2)"/><line x1="1268.7" y1="595.2" x2="1283.2" y2="595.2" stroke="#7f86ee" stroke-width="2"/><line x1="1268.7" y1="600.2" x2="1283.2" y2="600.2" stroke="#7f86ee" stroke-width="2"/><line x1="1268.7" y1="605" x2="1283.2" y2="605" stroke="#7f86ee" stroke-width="2"/>
</svg>
<svg class="abs" style="left:1850px;top:64px" width="60" height="450" viewBox="1850 64 60 450">
<rect x="1860.5" y="69.5" width="33" height="21" rx="2.5" fill="#3a3b3d" stroke="#77797c"/>
<rect x="1860.5" y="94.5" width="33" height="21" rx="2.5" fill="#3a3b3d" stroke="#77797c"/>
<rect x="1860" y="120" width="32.5" height="21" fill="#02a86b"/><rect x="1860" y="120" width="2" height="21" fill="#444"/><rect x="1860" y="120" width="32.5" height="1.3" fill="#333"/>
<g fill="none" stroke="#fff" stroke-width="1.5" stroke-linejoin="round">
<path d="M1871.5,73.5h9.5l2.5,2.5v11h-12z"/><path d="M1874,73.5v4h6v-4"/><rect x="1874" y="81.5" width="7" height="5.5"/>
<path d="M1881.5,100 A5.2,5.2 0 1 1 1875.5,99.5"/><path d="M1876.5,97 l3,2.2 l-3,2.4"/>
<path d="M1874,125 L1882,130.5 L1874,136z"/>
</g>
</svg>
<svg class="abs" style="left:1850px;top:150px" width="60" height="360" viewBox="1850 150 60 360">
<rect x="1856" y="154" width="40" height="28.6" fill="#f07ec2"/>
<path d="M1870,157 v12 h12 M1873,165 l3,-3 l2,2 l4,-4 M1879,160 h3 v3" fill="none" stroke="#3b1a2a" stroke-width="1.3" stroke-linejoin="round" stroke-linecap="round"/>
<text x="1876" y="179.4" text-anchor="middle" font-family="Liberation Sans" font-size="9.5" fill="#40232f">RADAR</text>
<rect x="1856" y="193" width="40" height="28.5" fill="#f27d84"/>
<path d="M1876,209 C1869,202 1870.5,196 1876,196 C1881.5,196 1883,202 1876,209z" fill="none" stroke="#3b1a2a" stroke-width="1.3" stroke-linejoin="round" stroke-linecap="round"/><circle cx="1876" cy="201" r="1.8" fill="none" stroke="#3b1a2a" stroke-width="1.3" stroke-linejoin="round" stroke-linecap="round"/>
<text x="1876" y="218.3" text-anchor="middle" font-family="Liberation Sans" font-size="9.5" fill="#40232f">MAP</text>
<rect x="1856" y="231.8" width="40" height="28.9" fill="#f2b583"/>
<path d="M1870,234.8 v12 h12 M1873,242.8 l3,-3 l2,2 l4,-4 M1879,237.8 h3 v3" fill="none" stroke="#3b1a2a" stroke-width="1.3" stroke-linejoin="round" stroke-linecap="round"/>
<text x="1876" y="257.5" text-anchor="middle" font-family="Liberation Sans" font-size="9.5" fill="#40232f">SSR</text>
<rect x="1856" y="270.7" width="40" height="28.9" fill="#f2ec81"/>
<path d="M1870,273.7 v12 h12 M1873,283.7 v-4 M1876,283.7 v-6 M1878.5,283.7 v-3 M1881,283.7 v-7" fill="none" stroke="#3b1a2a" stroke-width="1.3" stroke-linejoin="round" stroke-linecap="round"/>
<text x="1876" y="296.4" text-anchor="middle" font-family="Liberation Sans" font-size="9.5" fill="#40232f">SPS-27</text>
<rect x="1856" y="310" width="40" height="29.0" fill="#bdee7d"/>
<path d="M1870,313 v12 h12 M1873,323 v-4 M1876,323 v-6 M1878.5,323 v-3 M1881,323 v-7" fill="none" stroke="#3b1a2a" stroke-width="1.3" stroke-linejoin="round" stroke-linecap="round"/>
<text x="1876" y="335.8" text-anchor="middle" font-family="Liberation Sans" font-size="9.5" fill="#40232f">SPS-81</text>
<rect x="1856" y="349" width="40" height="28.7" fill="#81ea7d"/>
<path d="M1870,352 v12 h12 M1873,362 v-4 M1876,362 v-6 M1878.5,362 v-3 M1881,362 v-7" fill="none" stroke="#3b1a2a" stroke-width="1.3" stroke-linejoin="round" stroke-linecap="round"/>
<text x="1876" y="374.5" text-anchor="middle" font-family="Liberation Sans" font-size="9.5" fill="#40232f">SPS-PT</text>
<rect x="1856" y="388" width="40" height="28.8" fill="#81eab1"/>
<g fill="none" stroke="#3b1a2a" stroke-width="1.3" stroke-linejoin="round" stroke-linecap="round"><rect x="1870" y="391" width="5" height="5" rx="1.2"/><rect x="1877" y="391" width="5" height="5" rx="1.2"/><rect x="1870" y="398" width="5" height="5" rx="1.2"/><rect x="1877" y="398" width="5" height="5" rx="1.2"/></g>
<text x="1876" y="413.6" text-anchor="middle" font-family="Liberation Sans" font-size="9.5" fill="#40232f">TSA</text>
<rect x="1856" y="427" width="40" height="32.6" fill="#81eef3"/>
<path d="M1871,432 v3 h3 M1870.5,435 A6.5,6.5 0 1 1 1872,441 M1876,434 v4 l2.5,2" fill="none" stroke="#3b1a2a" stroke-width="1.3" stroke-linejoin="round" stroke-linecap="round"/>
<text x="1876" y="456.4" text-anchor="middle" font-family="Liberation Sans" font-size="9.5" fill="#40232f">LOG</text>
<rect x="1856" y="470" width="40" height="32.8" fill="#8bb9f1"/>
<path d="M1871.5,474 h9 v13 l-4.5,-3.5 l-4.5,3.5z" fill="none" stroke="#3b1a2a" stroke-width="1.3" stroke-linejoin="round" stroke-linecap="round"/>
<text x="1876" y="499.6" text-anchor="middle" font-family="Liberation Sans" font-size="9.5" fill="#40232f">PTT</text>
</svg>
</body></html>
